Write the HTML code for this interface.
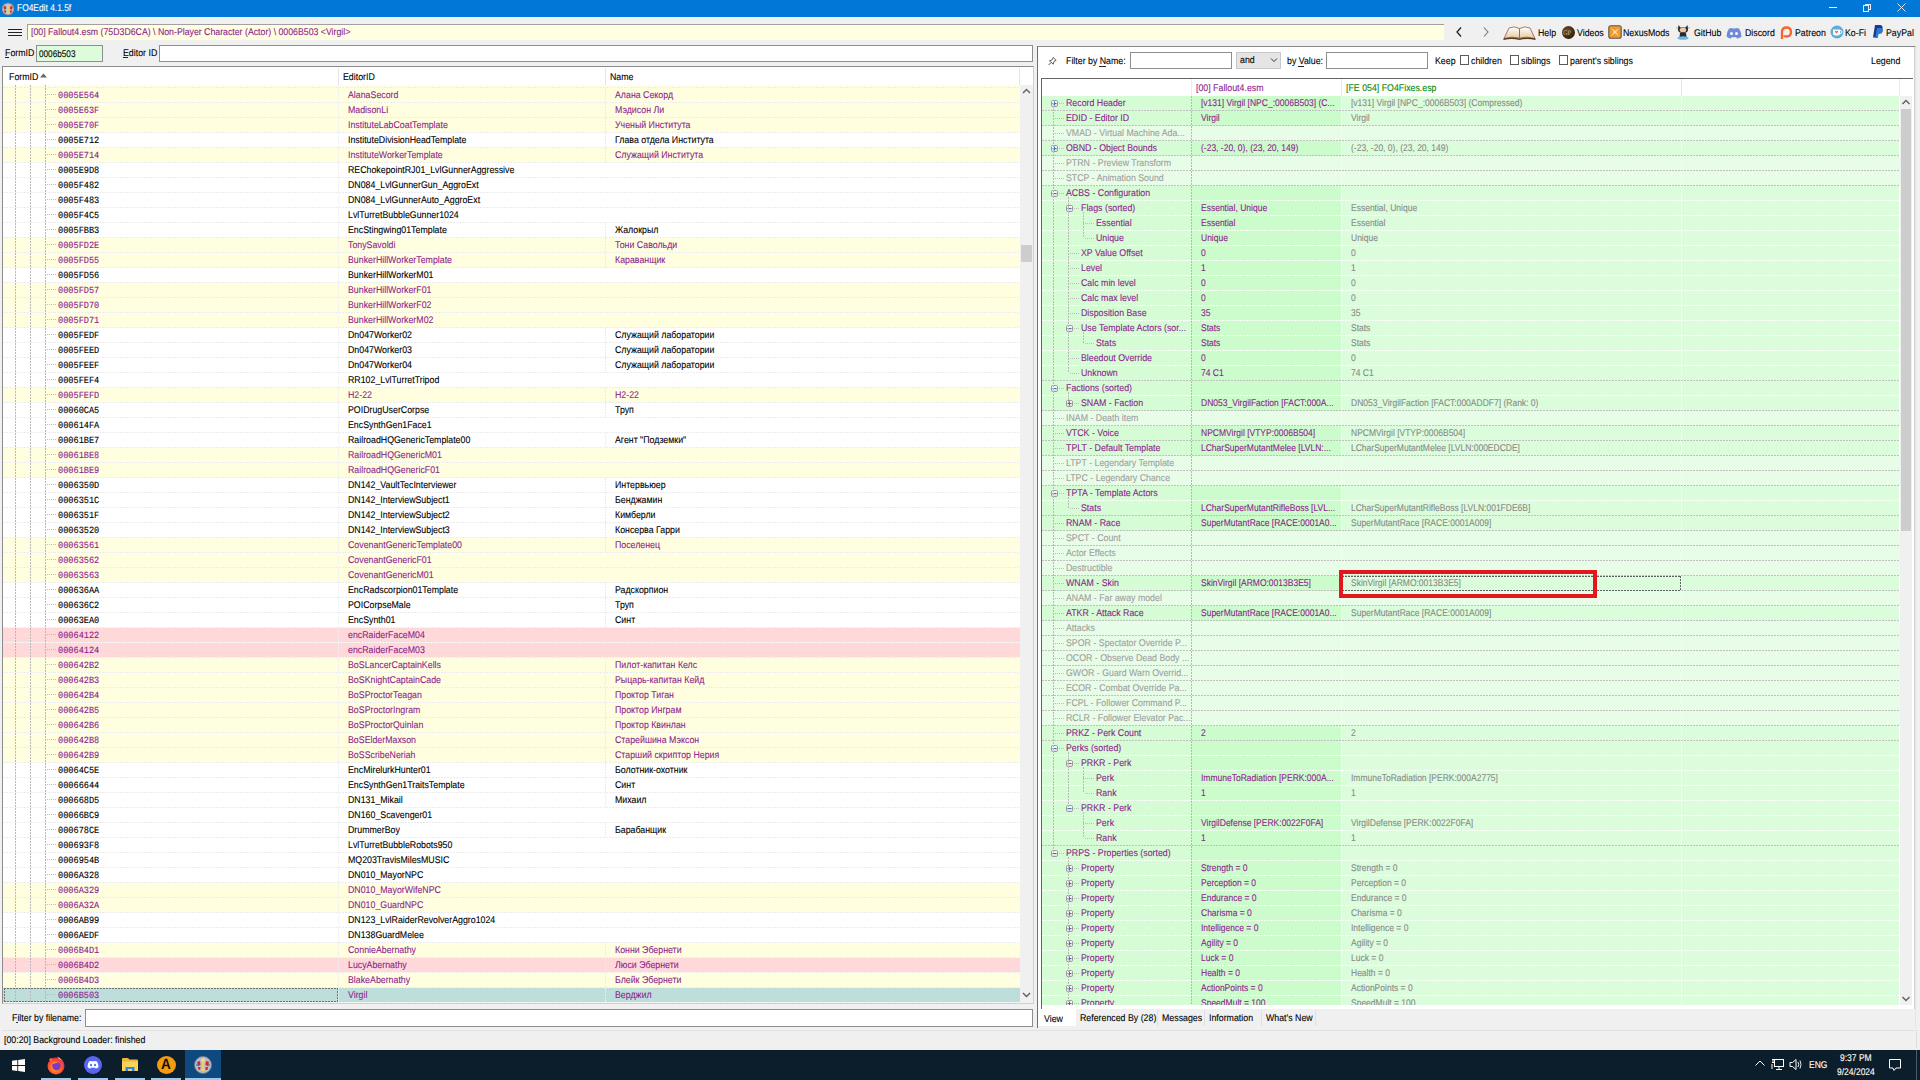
<!DOCTYPE html><html><head><meta charset="utf-8"><style>
*{margin:0;padding:0;box-sizing:border-box}
html,body{width:1920px;height:1080px;overflow:hidden;background:#f0f0f0}
body{position:relative;font-family:"Liberation Sans",sans-serif;font-size:8.8px;color:#000}
div{position:absolute}
.t{white-space:pre;line-height:14px;height:14px;-webkit-text-stroke-width:0.1px;font-size:9.75px;text-rendering:geometricPrecision;transform:scaleX(0.9026);transform-origin:0 0}
.m{-webkit-text-stroke-width:0.12px;transform:scaleX(0.905)}
.m{font-family:"Liberation Mono",monospace;font-size:9.5px}
.vd{background:repeating-linear-gradient(180deg,#b8b8b8 0 2px,transparent 2px 3px)}
.hdd{background:repeating-linear-gradient(90deg,#bdbdbd 0 1px,transparent 1px 2px)}
.hd{background:repeating-linear-gradient(90deg,#ececec 0 2px,#ffffff 2px 3px)}
</style></head><body>
<div style="left:0px;top:0px;width:1920px;height:17px;background:#0078d7"></div><svg style="position:absolute;left:1px;top:2px" width="14" height="14"><circle cx="7" cy="7" r="6.2" fill="#b8bcc8" stroke="#606878" stroke-width="0.8"/><path d="M6 2.5Q7.5 1.8 8 3L7.7 6.5L8.5 12H5.7L6.2 6.5Z" fill="#e8d070"/><path d="M2.5 4.5L4.8 4L5 7L3 7.5Z M9.5 4L11.8 4.5L11 7.5L9 7Z M3 8.5L5 8.5L4.8 11L3.2 10Z M9.2 8.5L11 8.5L10.8 10.5L9.2 11Z" fill="#d02828"/></svg><div class="t" style="left:17px;top:2px;color:#fff;font-size:9.75px;transform:scaleX(0.8615)">FO4Edit 4.1.5f</div><div style="left:1829px;top:7px;width:8px;height:1px;background:#f4f8ff"></div><div style="left:1865px;top:4px;width:6px;height:6px;border:1px solid #e8f0ff"></div><div style="left:1863px;top:5px;width:6px;height:7px;border:1px solid #e8f0ff;background:#0078d7"></div><svg style="position:absolute;left:1897px;top:3px" width="9" height="9"><path d="M0.5 0.5L8.5 8.5M8.5 0.5L0.5 8.5" stroke="#f0f4ff" stroke-width="0.9"/></svg><div style="left:8px;top:29px;width:14px;height:1.2px;background:#222"></div><div style="left:8px;top:32px;width:14px;height:1.2px;background:#222"></div><div style="left:8px;top:35px;width:14px;height:1.2px;background:#222"></div><div style="left:27px;top:24px;width:1417px;height:16px;background:#ffffe1;border-top:1px solid #a0a0a0;border-left:1px solid #a0a0a0"></div><div class="t" style="left:31px;top:25.5px;color:#8e1e8e;font-size:9.75px;transform:scaleX(0.8974)">[00] Fallout4.esm (75D3D6CA) \ Non-Player Character (Actor) \ 0006B503 &lt;Virgil&gt;</div><svg style="position:absolute;left:1453px;top:26px" width="40" height="12"><path d="M8 1.5L4 6L8 10.5" stroke="#222" stroke-width="1.3" fill="none"/><path d="M31 1.5L35 6L31 10.5" stroke="#777" stroke-width="1.1" fill="none"/></svg><svg style="position:absolute;left:1503px;top:24px" width="33" height="17"><defs><linearGradient id="bk" x1="0" y1="0" x2="0" y2="1"><stop offset="0" stop-color="#ffffff"/><stop offset="1" stop-color="#e8c8a0"/></linearGradient></defs><path d="M1 14.5L6 4Q11 1.5 16.5 4.5L16.5 14Q9 12 1 14.5Z" fill="url(#bk)" stroke="#8a6040" stroke-width="0.8"/><path d="M32 14.5L27 4Q22 1.5 16.5 4.5L16.5 14Q24 12 32 14.5Z" fill="url(#bk)" stroke="#8a6040" stroke-width="0.8"/><path d="M0.5 14.5Q9 12.5 16.5 14.5Q24 12.5 32.5 14.5L32.5 16Q24 14 16.5 16Q9 14 0.5 16Z" fill="#5a3818"/></svg><div class="t" style="left:1538px;top:27px;">Help</div><div style="left:1562px;top:26px;width:13px;height:13px;border-radius:50%;background:radial-gradient(circle at 40% 35%,#6a5030 0,#2a1a10 80%)"></div><div class="t" style="left:1563px;top:25.5px;color:#c8b070;font-size:7px;font-family:'Liberation Serif';-webkit-text-stroke-width:0">GP</div><div class="t" style="left:1577px;top:27px;">Videos</div><svg style="position:absolute;left:1608px;top:25px" width="14" height="14"><rect x="0.8" y="0.8" width="12.4" height="12.4" rx="2" fill="#f39a2a" stroke="#555" stroke-width="1.1"/><path d="M3 3L7 6L11 3L8 7L11 11L7 8L3 11L6 7Z" fill="#fde8c8"/></svg><div class="t" style="left:1623px;top:27px;">NexusMods</div><svg style="position:absolute;left:1676px;top:24px" width="14" height="17"><path d="M2.5 1L4.5 3.5H9.5L11.5 1L12 5Q12.5 9 7 9Q1.5 9 2 5Z" fill="#2a2a2a"/><ellipse cx="7" cy="6" rx="3.3" ry="2.2" fill="#f0c8a8"/><path d="M4 9H10L10.5 13H3.5Z" fill="#2a2a2a"/><ellipse cx="7" cy="14" rx="5.5" ry="1.8" fill="#6ab8e8"/><path d="M0 4H2M12 4H14" stroke="#888" stroke-width="0.6"/></svg><div class="t" style="left:1694px;top:27px;">GitHub</div><svg style="position:absolute;left:1726px;top:27px" width="16" height="12"><path d="M3 1.5Q6 0.5 7 1.5H9Q10 0.5 13 1.5Q15.5 5 15.5 9.5Q13.5 11.5 11 11.5L10 10Q8 10.7 6 10L5 11.5Q2.5 11.5 0.5 9.5Q0.5 5 3 1.5Z" fill="#7289da"/><ellipse cx="5.5" cy="6.5" rx="1.4" ry="1.6" fill="#fff"/><ellipse cx="10.5" cy="6.5" rx="1.4" ry="1.6" fill="#fff"/></svg><div class="t" style="left:1745px;top:27px;">Discord</div><svg style="position:absolute;left:1779px;top:25px" width="14" height="15"><path d="M3 14V7Q3 2.5 7.5 2.5Q12 2.5 12 7Q12 11.5 7.5 11.5Q5.5 11.5 5 10.5" fill="none" stroke="#f6652e" stroke-width="2.3"/></svg><div class="t" style="left:1795px;top:27px;">Patreon</div><svg style="position:absolute;left:1830px;top:25px" width="14" height="14"><circle cx="7" cy="7" r="6.5" fill="#5aaed8"/><path d="M3 4.5H10V8.5Q10 10.5 8 10.5H5Q3 10.5 3 8.5Z" fill="#fff"/><path d="M10 5.5Q12 5.5 12 7Q12 8.5 10 8.5" fill="none" stroke="#fff" stroke-width="1"/><path d="M6.5 8.5L5 7Q4.5 6 5.5 5.8Q6.2 5.7 6.5 6.4Q6.8 5.7 7.5 5.8Q8.5 6 8 7Z" fill="#ff5e5b"/></svg><div class="t" style="left:1845px;top:27px;">Ko-Fi</div><svg style="position:absolute;left:1872px;top:24px" width="11" height="15"><path d="M3 1H8Q11 1 10.5 5Q10 8 6 8H5L4 13.5H1Z" fill="#1a3a8a"/><path d="M5 4H9Q11.5 4 10.8 7.5Q10 10 7 10H6.5L5.8 14H3.2Z" fill="#2a7ad0"/></svg><div class="t" style="left:1886px;top:27px;">PayPal</div><div class="t" style="left:5px;top:47px;">FormID</div><div style="left:5px;top:57px;width:4px;height:1px;background:#222"></div><div style="left:36px;top:45px;width:67px;height:17px;background:#dcfcdc;border:1px solid #8e8e8e"></div><div class="t" style="left:39px;top:47.8px;color:#000;font-size:9.75px;transform:scaleX(0.8410)">0006b503</div><div class="t" style="left:123px;top:47px;">Editor ID</div><div style="left:123px;top:57px;width:5px;height:1px;background:#222"></div><div style="left:159px;top:45px;width:874px;height:17px;background:#fff;border:1px solid #8e8e8e"></div><div style="left:2px;top:66px;width:1032px;height:938px;background:#fff;border:1px solid #8c8c8c;border-right-color:#d0d0d0;border-bottom-color:#d0d0d0"></div><div class="t" style="left:9px;top:70.5px;">FormID</div><svg style="position:absolute;left:40px;top:73px" width="8" height="5"><path d="M0 4.5L3.5 0.5L7 4.5Z" fill="#666"/></svg><div style="left:338px;top:68px;width:1px;height:17px;background:#e5e5e5"></div><div class="t" style="left:343px;top:70.5px;">EditorID</div><div style="left:605px;top:68px;width:1px;height:17px;background:#e5e5e5"></div><div class="t" style="left:610px;top:70.5px;">Name</div><div style="left:1019px;top:68px;width:1px;height:17px;background:#e5e5e5"></div><div style="left:3px;top:85px;width:1017px;height:918px;overflow:hidden"><div style="left:0;top:0;width:1017px;height:3px;background:#ffffe0"></div><div style="left:0;top:3px;width:1017px;height:15px;background:#ffffe0"></div><div style="left:0;top:18px;width:1017px;height:15px;background:#ffffe0"></div><div style="left:0;top:33px;width:1017px;height:15px;background:#ffffe0"></div><div style="left:0;top:48px;width:1017px;height:15px;background:#ffffff"></div><div style="left:0;top:63px;width:1017px;height:15px;background:#ffffe0"></div><div style="left:0;top:78px;width:1017px;height:15px;background:#ffffff"></div><div style="left:0;top:93px;width:1017px;height:15px;background:#ffffff"></div><div style="left:0;top:108px;width:1017px;height:15px;background:#ffffff"></div><div style="left:0;top:123px;width:1017px;height:15px;background:#ffffff"></div><div style="left:0;top:138px;width:1017px;height:15px;background:#ffffff"></div><div style="left:0;top:153px;width:1017px;height:15px;background:#ffffe0"></div><div style="left:0;top:168px;width:1017px;height:15px;background:#ffffe0"></div><div style="left:0;top:183px;width:1017px;height:15px;background:#ffffff"></div><div style="left:0;top:198px;width:1017px;height:15px;background:#ffffe0"></div><div style="left:0;top:213px;width:1017px;height:15px;background:#ffffe0"></div><div style="left:0;top:228px;width:1017px;height:15px;background:#ffffe0"></div><div style="left:0;top:243px;width:1017px;height:15px;background:#ffffff"></div><div style="left:0;top:258px;width:1017px;height:15px;background:#ffffff"></div><div style="left:0;top:273px;width:1017px;height:15px;background:#ffffff"></div><div style="left:0;top:288px;width:1017px;height:15px;background:#ffffff"></div><div style="left:0;top:303px;width:1017px;height:15px;background:#ffffe0"></div><div style="left:0;top:318px;width:1017px;height:15px;background:#ffffff"></div><div style="left:0;top:333px;width:1017px;height:15px;background:#ffffff"></div><div style="left:0;top:348px;width:1017px;height:15px;background:#ffffff"></div><div style="left:0;top:363px;width:1017px;height:15px;background:#ffffe0"></div><div style="left:0;top:378px;width:1017px;height:15px;background:#ffffe0"></div><div style="left:0;top:393px;width:1017px;height:15px;background:#ffffff"></div><div style="left:0;top:408px;width:1017px;height:15px;background:#ffffff"></div><div style="left:0;top:423px;width:1017px;height:15px;background:#ffffff"></div><div style="left:0;top:438px;width:1017px;height:15px;background:#ffffff"></div><div style="left:0;top:453px;width:1017px;height:15px;background:#ffffe0"></div><div style="left:0;top:468px;width:1017px;height:15px;background:#ffffe0"></div><div style="left:0;top:483px;width:1017px;height:15px;background:#ffffe0"></div><div style="left:0;top:498px;width:1017px;height:15px;background:#ffffff"></div><div style="left:0;top:513px;width:1017px;height:15px;background:#ffffff"></div><div style="left:0;top:528px;width:1017px;height:15px;background:#ffffff"></div><div style="left:0;top:543px;width:1017px;height:15px;background:#ffd9d9"></div><div style="left:0;top:558px;width:1017px;height:15px;background:#ffd9d9"></div><div style="left:0;top:573px;width:1017px;height:15px;background:#ffffe0"></div><div style="left:0;top:588px;width:1017px;height:15px;background:#ffffe0"></div><div style="left:0;top:603px;width:1017px;height:15px;background:#ffffe0"></div><div style="left:0;top:618px;width:1017px;height:15px;background:#ffffe0"></div><div style="left:0;top:633px;width:1017px;height:15px;background:#ffffe0"></div><div style="left:0;top:648px;width:1017px;height:15px;background:#ffffe0"></div><div style="left:0;top:663px;width:1017px;height:15px;background:#ffffe0"></div><div style="left:0;top:678px;width:1017px;height:15px;background:#ffffff"></div><div style="left:0;top:693px;width:1017px;height:15px;background:#ffffff"></div><div style="left:0;top:708px;width:1017px;height:15px;background:#ffffff"></div><div style="left:0;top:723px;width:1017px;height:15px;background:#ffffff"></div><div style="left:0;top:738px;width:1017px;height:15px;background:#ffffff"></div><div style="left:0;top:753px;width:1017px;height:15px;background:#ffffff"></div><div style="left:0;top:768px;width:1017px;height:15px;background:#ffffff"></div><div style="left:0;top:783px;width:1017px;height:15px;background:#ffffff"></div><div style="left:0;top:798px;width:1017px;height:15px;background:#ffffe0"></div><div style="left:0;top:813px;width:1017px;height:15px;background:#ffffe0"></div><div style="left:0;top:828px;width:1017px;height:15px;background:#ffffff"></div><div style="left:0;top:843px;width:1017px;height:15px;background:#ffffff"></div><div style="left:0;top:858px;width:1017px;height:15px;background:#ffffe0"></div><div style="left:0;top:873px;width:1017px;height:15px;background:#ffd9d9"></div><div style="left:0;top:888px;width:1017px;height:15px;background:#ffffe0"></div><div style="left:0;top:903px;width:1017px;height:15px;background:#bddedb"></div><div class="hd" style="left:0;top:2px;width:1017px;height:1px"></div><div class="hd" style="left:0;top:17px;width:1017px;height:1px"></div><div class="hd" style="left:0;top:32px;width:1017px;height:1px"></div><div class="hd" style="left:0;top:47px;width:1017px;height:1px"></div><div class="hd" style="left:0;top:62px;width:1017px;height:1px"></div><div class="hd" style="left:0;top:77px;width:1017px;height:1px"></div><div class="hd" style="left:0;top:92px;width:1017px;height:1px"></div><div class="hd" style="left:0;top:107px;width:1017px;height:1px"></div><div class="hd" style="left:0;top:122px;width:1017px;height:1px"></div><div class="hd" style="left:0;top:137px;width:1017px;height:1px"></div><div class="hd" style="left:0;top:152px;width:1017px;height:1px"></div><div class="hd" style="left:0;top:167px;width:1017px;height:1px"></div><div class="hd" style="left:0;top:182px;width:1017px;height:1px"></div><div class="hd" style="left:0;top:197px;width:1017px;height:1px"></div><div class="hd" style="left:0;top:212px;width:1017px;height:1px"></div><div class="hd" style="left:0;top:227px;width:1017px;height:1px"></div><div class="hd" style="left:0;top:242px;width:1017px;height:1px"></div><div class="hd" style="left:0;top:257px;width:1017px;height:1px"></div><div class="hd" style="left:0;top:272px;width:1017px;height:1px"></div><div class="hd" style="left:0;top:287px;width:1017px;height:1px"></div><div class="hd" style="left:0;top:302px;width:1017px;height:1px"></div><div class="hd" style="left:0;top:317px;width:1017px;height:1px"></div><div class="hd" style="left:0;top:332px;width:1017px;height:1px"></div><div class="hd" style="left:0;top:347px;width:1017px;height:1px"></div><div class="hd" style="left:0;top:362px;width:1017px;height:1px"></div><div class="hd" style="left:0;top:377px;width:1017px;height:1px"></div><div class="hd" style="left:0;top:392px;width:1017px;height:1px"></div><div class="hd" style="left:0;top:407px;width:1017px;height:1px"></div><div class="hd" style="left:0;top:422px;width:1017px;height:1px"></div><div class="hd" style="left:0;top:437px;width:1017px;height:1px"></div><div class="hd" style="left:0;top:452px;width:1017px;height:1px"></div><div class="hd" style="left:0;top:467px;width:1017px;height:1px"></div><div class="hd" style="left:0;top:482px;width:1017px;height:1px"></div><div class="hd" style="left:0;top:497px;width:1017px;height:1px"></div><div class="hd" style="left:0;top:512px;width:1017px;height:1px"></div><div class="hd" style="left:0;top:527px;width:1017px;height:1px"></div><div class="hd" style="left:0;top:542px;width:1017px;height:1px"></div><div class="hd" style="left:0;top:557px;width:1017px;height:1px"></div><div class="hd" style="left:0;top:572px;width:1017px;height:1px"></div><div class="hd" style="left:0;top:587px;width:1017px;height:1px"></div><div class="hd" style="left:0;top:602px;width:1017px;height:1px"></div><div class="hd" style="left:0;top:617px;width:1017px;height:1px"></div><div class="hd" style="left:0;top:632px;width:1017px;height:1px"></div><div class="hd" style="left:0;top:647px;width:1017px;height:1px"></div><div class="hd" style="left:0;top:662px;width:1017px;height:1px"></div><div class="hd" style="left:0;top:677px;width:1017px;height:1px"></div><div class="hd" style="left:0;top:692px;width:1017px;height:1px"></div><div class="hd" style="left:0;top:707px;width:1017px;height:1px"></div><div class="hd" style="left:0;top:722px;width:1017px;height:1px"></div><div class="hd" style="left:0;top:737px;width:1017px;height:1px"></div><div class="hd" style="left:0;top:752px;width:1017px;height:1px"></div><div class="hd" style="left:0;top:767px;width:1017px;height:1px"></div><div class="hd" style="left:0;top:782px;width:1017px;height:1px"></div><div class="hd" style="left:0;top:797px;width:1017px;height:1px"></div><div class="hd" style="left:0;top:812px;width:1017px;height:1px"></div><div class="hd" style="left:0;top:827px;width:1017px;height:1px"></div><div class="hd" style="left:0;top:842px;width:1017px;height:1px"></div><div class="hd" style="left:0;top:857px;width:1017px;height:1px"></div><div class="hd" style="left:0;top:872px;width:1017px;height:1px"></div><div class="hd" style="left:0;top:887px;width:1017px;height:1px"></div><div class="hd" style="left:0;top:902px;width:1017px;height:1px"></div><div class="hd" style="left:0;top:917px;width:1017px;height:1px"></div><div class="vd" style="left:12px;top:0;width:1px;height:918px"></div><div class="vd" style="left:27px;top:0;width:1px;height:918px"></div><div class="vd" style="left:42px;top:0;width:1px;height:918px"></div><div style="left:335px;top:0;width:1px;height:918px;background:repeating-linear-gradient(180deg,#eeeeee 0 2px,transparent 2px 3px)"></div><div style="left:602px;top:3px;width:1px;height:14px;background:repeating-linear-gradient(180deg,#eaeaea 0 2px,transparent 2px 3px)"></div><div style="left:602px;top:18px;width:1px;height:14px;background:repeating-linear-gradient(180deg,#eaeaea 0 2px,transparent 2px 3px)"></div><div style="left:602px;top:33px;width:1px;height:14px;background:repeating-linear-gradient(180deg,#eaeaea 0 2px,transparent 2px 3px)"></div><div style="left:602px;top:48px;width:1px;height:14px;background:repeating-linear-gradient(180deg,#eaeaea 0 2px,transparent 2px 3px)"></div><div style="left:602px;top:63px;width:1px;height:14px;background:repeating-linear-gradient(180deg,#eaeaea 0 2px,transparent 2px 3px)"></div><div style="left:602px;top:138px;width:1px;height:14px;background:repeating-linear-gradient(180deg,#eaeaea 0 2px,transparent 2px 3px)"></div><div style="left:602px;top:153px;width:1px;height:14px;background:repeating-linear-gradient(180deg,#eaeaea 0 2px,transparent 2px 3px)"></div><div style="left:602px;top:168px;width:1px;height:14px;background:repeating-linear-gradient(180deg,#eaeaea 0 2px,transparent 2px 3px)"></div><div style="left:602px;top:243px;width:1px;height:14px;background:repeating-linear-gradient(180deg,#eaeaea 0 2px,transparent 2px 3px)"></div><div style="left:602px;top:258px;width:1px;height:14px;background:repeating-linear-gradient(180deg,#eaeaea 0 2px,transparent 2px 3px)"></div><div style="left:602px;top:273px;width:1px;height:14px;background:repeating-linear-gradient(180deg,#eaeaea 0 2px,transparent 2px 3px)"></div><div style="left:602px;top:303px;width:1px;height:14px;background:repeating-linear-gradient(180deg,#eaeaea 0 2px,transparent 2px 3px)"></div><div style="left:602px;top:318px;width:1px;height:14px;background:repeating-linear-gradient(180deg,#eaeaea 0 2px,transparent 2px 3px)"></div><div style="left:602px;top:348px;width:1px;height:14px;background:repeating-linear-gradient(180deg,#eaeaea 0 2px,transparent 2px 3px)"></div><div style="left:602px;top:393px;width:1px;height:14px;background:repeating-linear-gradient(180deg,#eaeaea 0 2px,transparent 2px 3px)"></div><div style="left:602px;top:408px;width:1px;height:14px;background:repeating-linear-gradient(180deg,#eaeaea 0 2px,transparent 2px 3px)"></div><div style="left:602px;top:423px;width:1px;height:14px;background:repeating-linear-gradient(180deg,#eaeaea 0 2px,transparent 2px 3px)"></div><div style="left:602px;top:438px;width:1px;height:14px;background:repeating-linear-gradient(180deg,#eaeaea 0 2px,transparent 2px 3px)"></div><div style="left:602px;top:453px;width:1px;height:14px;background:repeating-linear-gradient(180deg,#eaeaea 0 2px,transparent 2px 3px)"></div><div style="left:602px;top:498px;width:1px;height:14px;background:repeating-linear-gradient(180deg,#eaeaea 0 2px,transparent 2px 3px)"></div><div style="left:602px;top:513px;width:1px;height:14px;background:repeating-linear-gradient(180deg,#eaeaea 0 2px,transparent 2px 3px)"></div><div style="left:602px;top:528px;width:1px;height:14px;background:repeating-linear-gradient(180deg,#eaeaea 0 2px,transparent 2px 3px)"></div><div style="left:602px;top:573px;width:1px;height:14px;background:repeating-linear-gradient(180deg,#eaeaea 0 2px,transparent 2px 3px)"></div><div style="left:602px;top:588px;width:1px;height:14px;background:repeating-linear-gradient(180deg,#eaeaea 0 2px,transparent 2px 3px)"></div><div style="left:602px;top:603px;width:1px;height:14px;background:repeating-linear-gradient(180deg,#eaeaea 0 2px,transparent 2px 3px)"></div><div style="left:602px;top:618px;width:1px;height:14px;background:repeating-linear-gradient(180deg,#eaeaea 0 2px,transparent 2px 3px)"></div><div style="left:602px;top:633px;width:1px;height:14px;background:repeating-linear-gradient(180deg,#eaeaea 0 2px,transparent 2px 3px)"></div><div style="left:602px;top:648px;width:1px;height:14px;background:repeating-linear-gradient(180deg,#eaeaea 0 2px,transparent 2px 3px)"></div><div style="left:602px;top:663px;width:1px;height:14px;background:repeating-linear-gradient(180deg,#eaeaea 0 2px,transparent 2px 3px)"></div><div style="left:602px;top:678px;width:1px;height:14px;background:repeating-linear-gradient(180deg,#eaeaea 0 2px,transparent 2px 3px)"></div><div style="left:602px;top:693px;width:1px;height:14px;background:repeating-linear-gradient(180deg,#eaeaea 0 2px,transparent 2px 3px)"></div><div style="left:602px;top:708px;width:1px;height:14px;background:repeating-linear-gradient(180deg,#eaeaea 0 2px,transparent 2px 3px)"></div><div style="left:602px;top:738px;width:1px;height:14px;background:repeating-linear-gradient(180deg,#eaeaea 0 2px,transparent 2px 3px)"></div><div style="left:602px;top:858px;width:1px;height:14px;background:repeating-linear-gradient(180deg,#eaeaea 0 2px,transparent 2px 3px)"></div><div style="left:602px;top:873px;width:1px;height:14px;background:repeating-linear-gradient(180deg,#eaeaea 0 2px,transparent 2px 3px)"></div><div style="left:602px;top:888px;width:1px;height:14px;background:repeating-linear-gradient(180deg,#eaeaea 0 2px,transparent 2px 3px)"></div><div style="left:602px;top:903px;width:1px;height:14px;background:repeating-linear-gradient(180deg,#eaeaea 0 2px,transparent 2px 3px)"></div><div class="hdd" style="left:44px;top:9.0px;width:9px;height:1px"></div><div class="t m" style="left:55px;top:3.5px;color:#8e1e8e">0005E564</div><div class="t" style="left:345px;top:3.5px;color:#8e1e8e">AlanaSecord</div><div class="t" style="left:612px;top:3.5px;color:#8e1e8e">Алана Секорд</div><div class="hdd" style="left:44px;top:24.0px;width:9px;height:1px"></div><div class="t m" style="left:55px;top:18.5px;color:#8e1e8e">0005E63F</div><div class="t" style="left:345px;top:18.5px;color:#8e1e8e">MadisonLi</div><div class="t" style="left:612px;top:18.5px;color:#8e1e8e">Мэдисон Ли</div><div class="hdd" style="left:44px;top:39.0px;width:9px;height:1px"></div><div class="t m" style="left:55px;top:33.5px;color:#8e1e8e">0005E70F</div><div class="t" style="left:345px;top:33.5px;color:#8e1e8e">InstituteLabCoatTemplate</div><div class="t" style="left:612px;top:33.5px;color:#8e1e8e">Ученый Института</div><div class="hdd" style="left:44px;top:54.0px;width:9px;height:1px"></div><div class="t m" style="left:55px;top:48.5px;color:#000">0005E712</div><div class="t" style="left:345px;top:48.5px;color:#000">InstituteDivisionHeadTemplate</div><div class="t" style="left:612px;top:48.5px;color:#000">Глава отдела Института</div><div class="hdd" style="left:44px;top:69.0px;width:9px;height:1px"></div><div class="t m" style="left:55px;top:63.5px;color:#8e1e8e">0005E714</div><div class="t" style="left:345px;top:63.5px;color:#8e1e8e">InstituteWorkerTemplate</div><div class="t" style="left:612px;top:63.5px;color:#8e1e8e">Служащий Института</div><div class="hdd" style="left:44px;top:84.0px;width:9px;height:1px"></div><div class="t m" style="left:55px;top:78.5px;color:#000">0005E9D8</div><div class="t" style="left:345px;top:78.5px;color:#000">REChokepointRJ01_LvlGunnerAggressive</div><div class="hdd" style="left:44px;top:99.0px;width:9px;height:1px"></div><div class="t m" style="left:55px;top:93.5px;color:#000">0005F482</div><div class="t" style="left:345px;top:93.5px;color:#000">DN084_LvlGunnerGun_AggroExt</div><div class="hdd" style="left:44px;top:114.0px;width:9px;height:1px"></div><div class="t m" style="left:55px;top:108.5px;color:#000">0005F483</div><div class="t" style="left:345px;top:108.5px;color:#000">DN084_LvlGunnerAuto_AggroExt</div><div class="hdd" style="left:44px;top:129.0px;width:9px;height:1px"></div><div class="t m" style="left:55px;top:123.5px;color:#000">0005F4C5</div><div class="t" style="left:345px;top:123.5px;color:#000">LvlTurretBubbleGunner1024</div><div class="hdd" style="left:44px;top:144.0px;width:9px;height:1px"></div><div class="t m" style="left:55px;top:138.5px;color:#000">0005FBB3</div><div class="t" style="left:345px;top:138.5px;color:#000">EncStingwing01Template</div><div class="t" style="left:612px;top:138.5px;color:#000">Жалокрыл</div><div class="hdd" style="left:44px;top:159.0px;width:9px;height:1px"></div><div class="t m" style="left:55px;top:153.5px;color:#8e1e8e">0005FD2E</div><div class="t" style="left:345px;top:153.5px;color:#8e1e8e">TonySavoldi</div><div class="t" style="left:612px;top:153.5px;color:#8e1e8e">Тони Савольди</div><div class="hdd" style="left:44px;top:174.0px;width:9px;height:1px"></div><div class="t m" style="left:55px;top:168.5px;color:#8e1e8e">0005FD55</div><div class="t" style="left:345px;top:168.5px;color:#8e1e8e">BunkerHillWorkerTemplate</div><div class="t" style="left:612px;top:168.5px;color:#8e1e8e">Караванщик</div><div class="hdd" style="left:44px;top:189.0px;width:9px;height:1px"></div><div class="t m" style="left:55px;top:183.5px;color:#000">0005FD56</div><div class="t" style="left:345px;top:183.5px;color:#000">BunkerHillWorkerM01</div><div class="hdd" style="left:44px;top:204.0px;width:9px;height:1px"></div><div class="t m" style="left:55px;top:198.5px;color:#8e1e8e">0005FD57</div><div class="t" style="left:345px;top:198.5px;color:#8e1e8e">BunkerHillWorkerF01</div><div class="hdd" style="left:44px;top:219.0px;width:9px;height:1px"></div><div class="t m" style="left:55px;top:213.5px;color:#8e1e8e">0005FD70</div><div class="t" style="left:345px;top:213.5px;color:#8e1e8e">BunkerHillWorkerF02</div><div class="hdd" style="left:44px;top:234.0px;width:9px;height:1px"></div><div class="t m" style="left:55px;top:228.5px;color:#8e1e8e">0005FD71</div><div class="t" style="left:345px;top:228.5px;color:#8e1e8e">BunkerHillWorkerM02</div><div class="hdd" style="left:44px;top:249.0px;width:9px;height:1px"></div><div class="t m" style="left:55px;top:243.5px;color:#000">0005FEDF</div><div class="t" style="left:345px;top:243.5px;color:#000">Dn047Worker02</div><div class="t" style="left:612px;top:243.5px;color:#000">Служащий лаборатории</div><div class="hdd" style="left:44px;top:264.0px;width:9px;height:1px"></div><div class="t m" style="left:55px;top:258.5px;color:#000">0005FEED</div><div class="t" style="left:345px;top:258.5px;color:#000">Dn047Worker03</div><div class="t" style="left:612px;top:258.5px;color:#000">Служащий лаборатории</div><div class="hdd" style="left:44px;top:279.0px;width:9px;height:1px"></div><div class="t m" style="left:55px;top:273.5px;color:#000">0005FEEF</div><div class="t" style="left:345px;top:273.5px;color:#000">Dn047Worker04</div><div class="t" style="left:612px;top:273.5px;color:#000">Служащий лаборатории</div><div class="hdd" style="left:44px;top:294.0px;width:9px;height:1px"></div><div class="t m" style="left:55px;top:288.5px;color:#000">0005FEF4</div><div class="t" style="left:345px;top:288.5px;color:#000">RR102_LvlTurretTripod</div><div class="hdd" style="left:44px;top:309.0px;width:9px;height:1px"></div><div class="t m" style="left:55px;top:303.5px;color:#8e1e8e">0005FEFD</div><div class="t" style="left:345px;top:303.5px;color:#8e1e8e">H2-22</div><div class="t" style="left:612px;top:303.5px;color:#8e1e8e">H2-22</div><div class="hdd" style="left:44px;top:324.0px;width:9px;height:1px"></div><div class="t m" style="left:55px;top:318.5px;color:#000">00060CA5</div><div class="t" style="left:345px;top:318.5px;color:#000">POIDrugUserCorpse</div><div class="t" style="left:612px;top:318.5px;color:#000">Труп</div><div class="hdd" style="left:44px;top:339.0px;width:9px;height:1px"></div><div class="t m" style="left:55px;top:333.5px;color:#000">000614FA</div><div class="t" style="left:345px;top:333.5px;color:#000">EncSynthGen1Face1</div><div class="hdd" style="left:44px;top:354.0px;width:9px;height:1px"></div><div class="t m" style="left:55px;top:348.5px;color:#000">00061BE7</div><div class="t" style="left:345px;top:348.5px;color:#000">RailroadHQGenericTemplate00</div><div class="t" style="left:612px;top:348.5px;color:#000">Агент "Подземки"</div><div class="hdd" style="left:44px;top:369.0px;width:9px;height:1px"></div><div class="t m" style="left:55px;top:363.5px;color:#8e1e8e">00061BE8</div><div class="t" style="left:345px;top:363.5px;color:#8e1e8e">RailroadHQGenericM01</div><div class="hdd" style="left:44px;top:384.0px;width:9px;height:1px"></div><div class="t m" style="left:55px;top:378.5px;color:#8e1e8e">00061BE9</div><div class="t" style="left:345px;top:378.5px;color:#8e1e8e">RailroadHQGenericF01</div><div class="hdd" style="left:44px;top:399.0px;width:9px;height:1px"></div><div class="t m" style="left:55px;top:393.5px;color:#000">0006350D</div><div class="t" style="left:345px;top:393.5px;color:#000">DN142_VaultTecInterviewer</div><div class="t" style="left:612px;top:393.5px;color:#000">Интервьюер</div><div class="hdd" style="left:44px;top:414.0px;width:9px;height:1px"></div><div class="t m" style="left:55px;top:408.5px;color:#000">0006351C</div><div class="t" style="left:345px;top:408.5px;color:#000">DN142_InterviewSubject1</div><div class="t" style="left:612px;top:408.5px;color:#000">Бенджамин</div><div class="hdd" style="left:44px;top:429.0px;width:9px;height:1px"></div><div class="t m" style="left:55px;top:423.5px;color:#000">0006351F</div><div class="t" style="left:345px;top:423.5px;color:#000">DN142_InterviewSubject2</div><div class="t" style="left:612px;top:423.5px;color:#000">Кимберли</div><div class="hdd" style="left:44px;top:444.0px;width:9px;height:1px"></div><div class="t m" style="left:55px;top:438.5px;color:#000">00063520</div><div class="t" style="left:345px;top:438.5px;color:#000">DN142_InterviewSubject3</div><div class="t" style="left:612px;top:438.5px;color:#000">Консерва Гарри</div><div class="hdd" style="left:44px;top:459.0px;width:9px;height:1px"></div><div class="t m" style="left:55px;top:453.5px;color:#8e1e8e">00063561</div><div class="t" style="left:345px;top:453.5px;color:#8e1e8e">CovenantGenericTemplate00</div><div class="t" style="left:612px;top:453.5px;color:#8e1e8e">Поселенец</div><div class="hdd" style="left:44px;top:474.0px;width:9px;height:1px"></div><div class="t m" style="left:55px;top:468.5px;color:#8e1e8e">00063562</div><div class="t" style="left:345px;top:468.5px;color:#8e1e8e">CovenantGenericF01</div><div class="hdd" style="left:44px;top:489.0px;width:9px;height:1px"></div><div class="t m" style="left:55px;top:483.5px;color:#8e1e8e">00063563</div><div class="t" style="left:345px;top:483.5px;color:#8e1e8e">CovenantGenericM01</div><div class="hdd" style="left:44px;top:504.0px;width:9px;height:1px"></div><div class="t m" style="left:55px;top:498.5px;color:#000">000636AA</div><div class="t" style="left:345px;top:498.5px;color:#000">EncRadscorpion01Template</div><div class="t" style="left:612px;top:498.5px;color:#000">Радскорпион</div><div class="hdd" style="left:44px;top:519.0px;width:9px;height:1px"></div><div class="t m" style="left:55px;top:513.5px;color:#000">000636C2</div><div class="t" style="left:345px;top:513.5px;color:#000">POICorpseMale</div><div class="t" style="left:612px;top:513.5px;color:#000">Труп</div><div class="hdd" style="left:44px;top:534.0px;width:9px;height:1px"></div><div class="t m" style="left:55px;top:528.5px;color:#000">00063EA0</div><div class="t" style="left:345px;top:528.5px;color:#000">EncSynth01</div><div class="t" style="left:612px;top:528.5px;color:#000">Синт</div><div class="hdd" style="left:44px;top:549.0px;width:9px;height:1px"></div><div class="t m" style="left:55px;top:543.5px;color:#8e1e8e">00064122</div><div class="t" style="left:345px;top:543.5px;color:#8e1e8e">encRaiderFaceM04</div><div class="hdd" style="left:44px;top:564.0px;width:9px;height:1px"></div><div class="t m" style="left:55px;top:558.5px;color:#8e1e8e">00064124</div><div class="t" style="left:345px;top:558.5px;color:#8e1e8e">encRaiderFaceM03</div><div class="hdd" style="left:44px;top:579.0px;width:9px;height:1px"></div><div class="t m" style="left:55px;top:573.5px;color:#8e1e8e">000642B2</div><div class="t" style="left:345px;top:573.5px;color:#8e1e8e">BoSLancerCaptainKells</div><div class="t" style="left:612px;top:573.5px;color:#8e1e8e">Пилот-капитан Келс</div><div class="hdd" style="left:44px;top:594.0px;width:9px;height:1px"></div><div class="t m" style="left:55px;top:588.5px;color:#8e1e8e">000642B3</div><div class="t" style="left:345px;top:588.5px;color:#8e1e8e">BoSKnightCaptainCade</div><div class="t" style="left:612px;top:588.5px;color:#8e1e8e">Рыцарь-капитан Кейд</div><div class="hdd" style="left:44px;top:609.0px;width:9px;height:1px"></div><div class="t m" style="left:55px;top:603.5px;color:#8e1e8e">000642B4</div><div class="t" style="left:345px;top:603.5px;color:#8e1e8e">BoSProctorTeagan</div><div class="t" style="left:612px;top:603.5px;color:#8e1e8e">Проктор Тиган</div><div class="hdd" style="left:44px;top:624.0px;width:9px;height:1px"></div><div class="t m" style="left:55px;top:618.5px;color:#8e1e8e">000642B5</div><div class="t" style="left:345px;top:618.5px;color:#8e1e8e">BoSProctorIngram</div><div class="t" style="left:612px;top:618.5px;color:#8e1e8e">Проктор Инграм</div><div class="hdd" style="left:44px;top:639.0px;width:9px;height:1px"></div><div class="t m" style="left:55px;top:633.5px;color:#8e1e8e">000642B6</div><div class="t" style="left:345px;top:633.5px;color:#8e1e8e">BoSProctorQuinlan</div><div class="t" style="left:612px;top:633.5px;color:#8e1e8e">Проктор Квинлан</div><div class="hdd" style="left:44px;top:654.0px;width:9px;height:1px"></div><div class="t m" style="left:55px;top:648.5px;color:#8e1e8e">000642B8</div><div class="t" style="left:345px;top:648.5px;color:#8e1e8e">BoSElderMaxson</div><div class="t" style="left:612px;top:648.5px;color:#8e1e8e">Старейшина Мэксон</div><div class="hdd" style="left:44px;top:669.0px;width:9px;height:1px"></div><div class="t m" style="left:55px;top:663.5px;color:#8e1e8e">000642B9</div><div class="t" style="left:345px;top:663.5px;color:#8e1e8e">BoSScribeNeriah</div><div class="t" style="left:612px;top:663.5px;color:#8e1e8e">Старший скриптор Нерия</div><div class="hdd" style="left:44px;top:684.0px;width:9px;height:1px"></div><div class="t m" style="left:55px;top:678.5px;color:#000">00064C5E</div><div class="t" style="left:345px;top:678.5px;color:#000">EncMirelurkHunter01</div><div class="t" style="left:612px;top:678.5px;color:#000">Болотник-охотник</div><div class="hdd" style="left:44px;top:699.0px;width:9px;height:1px"></div><div class="t m" style="left:55px;top:693.5px;color:#000">00066644</div><div class="t" style="left:345px;top:693.5px;color:#000">EncSynthGen1TraitsTemplate</div><div class="t" style="left:612px;top:693.5px;color:#000">Синт</div><div class="hdd" style="left:44px;top:714.0px;width:9px;height:1px"></div><div class="t m" style="left:55px;top:708.5px;color:#000">000668D5</div><div class="t" style="left:345px;top:708.5px;color:#000">DN131_Mikail</div><div class="t" style="left:612px;top:708.5px;color:#000">Михаил</div><div class="hdd" style="left:44px;top:729.0px;width:9px;height:1px"></div><div class="t m" style="left:55px;top:723.5px;color:#000">00066BC9</div><div class="t" style="left:345px;top:723.5px;color:#000">DN160_Scavenger01</div><div class="hdd" style="left:44px;top:744.0px;width:9px;height:1px"></div><div class="t m" style="left:55px;top:738.5px;color:#000">000678CE</div><div class="t" style="left:345px;top:738.5px;color:#000">DrummerBoy</div><div class="t" style="left:612px;top:738.5px;color:#000">Барабанщик</div><div class="hdd" style="left:44px;top:759.0px;width:9px;height:1px"></div><div class="t m" style="left:55px;top:753.5px;color:#000">000693F8</div><div class="t" style="left:345px;top:753.5px;color:#000">LvlTurretBubbleRobots950</div><div class="hdd" style="left:44px;top:774.0px;width:9px;height:1px"></div><div class="t m" style="left:55px;top:768.5px;color:#000">0006954B</div><div class="t" style="left:345px;top:768.5px;color:#000">MQ203TravisMilesMUSIC</div><div class="hdd" style="left:44px;top:789.0px;width:9px;height:1px"></div><div class="t m" style="left:55px;top:783.5px;color:#000">0006A328</div><div class="t" style="left:345px;top:783.5px;color:#000">DN010_MayorNPC</div><div class="hdd" style="left:44px;top:804.0px;width:9px;height:1px"></div><div class="t m" style="left:55px;top:798.5px;color:#8e1e8e">0006A329</div><div class="t" style="left:345px;top:798.5px;color:#8e1e8e">DN010_MayorWifeNPC</div><div class="hdd" style="left:44px;top:819.0px;width:9px;height:1px"></div><div class="t m" style="left:55px;top:813.5px;color:#8e1e8e">0006A32A</div><div class="t" style="left:345px;top:813.5px;color:#8e1e8e">DN010_GuardNPC</div><div class="hdd" style="left:44px;top:834.0px;width:9px;height:1px"></div><div class="t m" style="left:55px;top:828.5px;color:#000">0006AB99</div><div class="t" style="left:345px;top:828.5px;color:#000">DN123_LvlRaiderRevolverAggro1024</div><div class="hdd" style="left:44px;top:849.0px;width:9px;height:1px"></div><div class="t m" style="left:55px;top:843.5px;color:#000">0006AEDF</div><div class="t" style="left:345px;top:843.5px;color:#000">DN138GuardMelee</div><div class="hdd" style="left:44px;top:864.0px;width:9px;height:1px"></div><div class="t m" style="left:55px;top:858.5px;color:#8e1e8e">0006B4D1</div><div class="t" style="left:345px;top:858.5px;color:#8e1e8e">ConnieAbernathy</div><div class="t" style="left:612px;top:858.5px;color:#8e1e8e">Конни Эбернети</div><div class="hdd" style="left:44px;top:879.0px;width:9px;height:1px"></div><div class="t m" style="left:55px;top:873.5px;color:#8e1e8e">0006B4D2</div><div class="t" style="left:345px;top:873.5px;color:#8e1e8e">LucyAbernathy</div><div class="t" style="left:612px;top:873.5px;color:#8e1e8e">Люси Эбернети</div><div class="hdd" style="left:44px;top:894.0px;width:9px;height:1px"></div><div class="t m" style="left:55px;top:888.5px;color:#8e1e8e">0006B4D3</div><div class="t" style="left:345px;top:888.5px;color:#8e1e8e">BlakeAbernathy</div><div class="t" style="left:612px;top:888.5px;color:#8e1e8e">Блейк Эбернети</div><div class="hdd" style="left:44px;top:909.0px;width:9px;height:1px"></div><div class="t m" style="left:55px;top:903.5px;color:#8e1e8e">0006B503</div><div class="t" style="left:345px;top:903.5px;color:#8e1e8e">Virgil</div><div class="t" style="left:612px;top:903.5px;color:#8e1e8e">Верджил</div><div style="left:1px;top:903px;width:334px;height:1px;background:repeating-linear-gradient(90deg,#707070 0 2px,transparent 2px 3px)"></div><div style="left:1px;top:916px;width:334px;height:1px;background:repeating-linear-gradient(90deg,#707070 0 2px,transparent 2px 3px)"></div><div style="left:1px;top:903px;width:1px;height:14px;background:repeating-linear-gradient(180deg,#707070 0 2px,transparent 2px 3px)"></div><div style="left:334px;top:903px;width:1px;height:14px;background:repeating-linear-gradient(180deg,#707070 0 2px,transparent 2px 3px)"></div></div><div style="left:1020px;top:85px;width:13px;height:918px;background:#f0f0f0"></div><svg style="position:absolute;left:1021px;top:87px" width="11" height="8"><path d="M2 6L5.5 2.5L9 6" stroke="#606060" stroke-width="1.4" fill="none"/></svg><svg style="position:absolute;left:1021px;top:991px" width="11" height="8"><path d="M2 2L5.5 5.5L9 2" stroke="#606060" stroke-width="1.4" fill="none"/></svg><div style="left:1021px;top:245px;width:11px;height:17px;background:#cdcdcd"></div><div class="t" style="left:12px;top:1011.5px;">Filter by filename:</div><div style="left:16px;top:1022px;width:2px;height:1px;background:#333"></div><div style="left:85px;top:1009px;width:948px;height:18px;background:#fff;border:1px solid #8e8e8e"></div><div style="left:2px;top:1030px;width:1916px;height:1px;background:#e2e2e2"></div><div style="left:1916px;top:1032px;width:1px;height:16px;background:#dcdcdc"></div><div class="t" style="left:4px;top:1034px;font-size:9.75px;transform:scaleX(0.9026)">[00:20] Background Loader: finished</div><div style="left:1037px;top:46px;width:879px;height:982px;background:#fff;border-left:1px solid #6e6e6e;border-top:1px solid #8a8a8a;border-right:1px solid #e4e4e4"></div><svg style="position:absolute;left:1047px;top:56px" width="11" height="11"><path d="M2.5 4.8L5.2 3.8L6.2 1.5L9.2 4.4L7 5.4L6.2 8.2Z" fill="#fff" stroke="#4a4a5a" stroke-width="0.9" stroke-linejoin="round"/><path d="M4 6.6L1.6 9" stroke="#4a4a5a" stroke-width="1"/></svg><div class="t" style="left:1066px;top:55px;">Filter by Name:</div><div style="left:1099px;top:66px;width:7px;height:1px;background:#222"></div><div style="left:1130px;top:52px;width:102px;height:17px;background:#fff;border:1px solid #8e8e8e"></div><div style="left:1236px;top:52px;width:45px;height:17px;background:#e5e5e5;border:1px solid #c8c8c8"></div><div class="t" style="left:1240px;top:54px;">and</div><svg style="position:absolute;left:1270px;top:57px" width="8" height="6"><path d="M1 1.5L4 4.5L7 1.5" stroke="#333" stroke-width="1" fill="none"/></svg><div class="t" style="left:1287px;top:55px;">by Value:</div><div style="left:1298px;top:66px;width:6px;height:1px;background:#222"></div><div style="left:1326px;top:52px;width:102px;height:17px;background:#fff;border:1px solid #8e8e8e"></div><div class="t" style="left:1435px;top:55px;">Keep</div><div style="left:1460px;top:55px;width:9px;height:10px;background:#fff;border:1px solid #5a5a5a"></div><div class="t" style="left:1471px;top:54.5px;">children</div><div style="left:1510px;top:55px;width:9px;height:10px;background:#fff;border:1px solid #5a5a5a"></div><div class="t" style="left:1521px;top:54.5px;">siblings</div><div style="left:1559px;top:55px;width:9px;height:10px;background:#fff;border:1px solid #5a5a5a"></div><div class="t" style="left:1570px;top:54.5px;">parent's siblings</div><div class="t" style="left:1871px;top:55px;">Legend</div><div style="left:1041px;top:78px;width:872px;height:931px;background:#fff;border-top:1px solid #646464;border-left:1px solid #646464"></div><div style="left:1914px;top:47px;width:1px;height:981px;background:#d4d4d4"></div><div class="t" style="left:1196px;top:81.5px;color:#8e1e8e">[00] Fallout4.esm</div><div style="left:1191px;top:79px;width:1px;height:17px;background:#ececec"></div><div style="left:1341px;top:79px;width:1px;height:17px;background:#e8e8e8"></div><div class="t" style="left:1346px;top:81.5px;color:#088a08">[FE 054] FO4Fixes.esp</div><div style="left:1681px;top:79px;width:1px;height:17px;background:#e8e8e8"></div><div style="left:1899px;top:79px;width:1px;height:17px;background:#e8e8e8"></div><div style="left:1042px;top:96px;width:858px;height:909px;overflow:hidden"><div style="left:0;top:0px;width:149px;height:15px;background:#d6fcd6"></div><div style="left:149px;top:0px;width:150px;height:15px;background:#ccfbcc"></div><div style="left:299px;top:0px;width:558px;height:15px;background:#dcfddc"></div><div style="left:0;top:15px;width:149px;height:15px;background:#d6fcd6"></div><div style="left:149px;top:15px;width:150px;height:15px;background:#ccfbcc"></div><div style="left:299px;top:15px;width:558px;height:15px;background:#dcfddc"></div><div style="left:0;top:30px;width:858px;height:15px;background:#e8fde8"></div><div style="left:0;top:45px;width:149px;height:15px;background:#d6fcd6"></div><div style="left:149px;top:45px;width:150px;height:15px;background:#ccfbcc"></div><div style="left:299px;top:45px;width:558px;height:15px;background:#dcfddc"></div><div style="left:0;top:60px;width:858px;height:15px;background:#e8fde8"></div><div style="left:0;top:75px;width:858px;height:15px;background:#e8fde8"></div><div style="left:0;top:90px;width:149px;height:15px;background:#d6fcd6"></div><div style="left:149px;top:90px;width:150px;height:15px;background:#ccfbcc"></div><div style="left:299px;top:90px;width:558px;height:15px;background:#dcfddc"></div><div style="left:0;top:105px;width:149px;height:15px;background:#d6fcd6"></div><div style="left:149px;top:105px;width:150px;height:15px;background:#ccfbcc"></div><div style="left:299px;top:105px;width:558px;height:15px;background:#dcfddc"></div><div style="left:0;top:120px;width:149px;height:15px;background:#d6fcd6"></div><div style="left:149px;top:120px;width:150px;height:15px;background:#ccfbcc"></div><div style="left:299px;top:120px;width:558px;height:15px;background:#dcfddc"></div><div style="left:0;top:135px;width:149px;height:15px;background:#d6fcd6"></div><div style="left:149px;top:135px;width:150px;height:15px;background:#ccfbcc"></div><div style="left:299px;top:135px;width:558px;height:15px;background:#dcfddc"></div><div style="left:0;top:150px;width:149px;height:15px;background:#d6fcd6"></div><div style="left:149px;top:150px;width:150px;height:15px;background:#ccfbcc"></div><div style="left:299px;top:150px;width:558px;height:15px;background:#dcfddc"></div><div style="left:0;top:165px;width:149px;height:15px;background:#d6fcd6"></div><div style="left:149px;top:165px;width:150px;height:15px;background:#ccfbcc"></div><div style="left:299px;top:165px;width:558px;height:15px;background:#dcfddc"></div><div style="left:0;top:180px;width:149px;height:15px;background:#d6fcd6"></div><div style="left:149px;top:180px;width:150px;height:15px;background:#ccfbcc"></div><div style="left:299px;top:180px;width:558px;height:15px;background:#dcfddc"></div><div style="left:0;top:195px;width:149px;height:15px;background:#d6fcd6"></div><div style="left:149px;top:195px;width:150px;height:15px;background:#ccfbcc"></div><div style="left:299px;top:195px;width:558px;height:15px;background:#dcfddc"></div><div style="left:0;top:210px;width:149px;height:15px;background:#d6fcd6"></div><div style="left:149px;top:210px;width:150px;height:15px;background:#ccfbcc"></div><div style="left:299px;top:210px;width:558px;height:15px;background:#dcfddc"></div><div style="left:0;top:225px;width:149px;height:15px;background:#d6fcd6"></div><div style="left:149px;top:225px;width:150px;height:15px;background:#ccfbcc"></div><div style="left:299px;top:225px;width:558px;height:15px;background:#dcfddc"></div><div style="left:0;top:240px;width:149px;height:15px;background:#d6fcd6"></div><div style="left:149px;top:240px;width:150px;height:15px;background:#ccfbcc"></div><div style="left:299px;top:240px;width:558px;height:15px;background:#dcfddc"></div><div style="left:0;top:255px;width:149px;height:15px;background:#d6fcd6"></div><div style="left:149px;top:255px;width:150px;height:15px;background:#ccfbcc"></div><div style="left:299px;top:255px;width:558px;height:15px;background:#dcfddc"></div><div style="left:0;top:270px;width:149px;height:15px;background:#d6fcd6"></div><div style="left:149px;top:270px;width:150px;height:15px;background:#ccfbcc"></div><div style="left:299px;top:270px;width:558px;height:15px;background:#dcfddc"></div><div style="left:0;top:285px;width:149px;height:15px;background:#d6fcd6"></div><div style="left:149px;top:285px;width:150px;height:15px;background:#ccfbcc"></div><div style="left:299px;top:285px;width:558px;height:15px;background:#dcfddc"></div><div style="left:0;top:300px;width:149px;height:15px;background:#d6fcd6"></div><div style="left:149px;top:300px;width:150px;height:15px;background:#ccfbcc"></div><div style="left:299px;top:300px;width:558px;height:15px;background:#dcfddc"></div><div style="left:0;top:315px;width:858px;height:15px;background:#e8fde8"></div><div style="left:0;top:330px;width:149px;height:15px;background:#d6fcd6"></div><div style="left:149px;top:330px;width:150px;height:15px;background:#ccfbcc"></div><div style="left:299px;top:330px;width:558px;height:15px;background:#dcfddc"></div><div style="left:0;top:345px;width:149px;height:15px;background:#d6fcd6"></div><div style="left:149px;top:345px;width:150px;height:15px;background:#ccfbcc"></div><div style="left:299px;top:345px;width:558px;height:15px;background:#dcfddc"></div><div style="left:0;top:360px;width:858px;height:15px;background:#e8fde8"></div><div style="left:0;top:375px;width:858px;height:15px;background:#e8fde8"></div><div style="left:0;top:390px;width:149px;height:15px;background:#d6fcd6"></div><div style="left:149px;top:390px;width:150px;height:15px;background:#ccfbcc"></div><div style="left:299px;top:390px;width:558px;height:15px;background:#dcfddc"></div><div style="left:0;top:405px;width:149px;height:15px;background:#d6fcd6"></div><div style="left:149px;top:405px;width:150px;height:15px;background:#ccfbcc"></div><div style="left:299px;top:405px;width:558px;height:15px;background:#dcfddc"></div><div style="left:0;top:420px;width:149px;height:15px;background:#d6fcd6"></div><div style="left:149px;top:420px;width:150px;height:15px;background:#ccfbcc"></div><div style="left:299px;top:420px;width:558px;height:15px;background:#dcfddc"></div><div style="left:0;top:435px;width:858px;height:15px;background:#e8fde8"></div><div style="left:0;top:450px;width:858px;height:15px;background:#e8fde8"></div><div style="left:0;top:465px;width:858px;height:15px;background:#e8fde8"></div><div style="left:0;top:480px;width:149px;height:15px;background:#d6fcd6"></div><div style="left:149px;top:480px;width:150px;height:15px;background:#ccfbcc"></div><div style="left:299px;top:480px;width:558px;height:15px;background:#dcfddc"></div><div style="left:0;top:495px;width:858px;height:15px;background:#e8fde8"></div><div style="left:0;top:510px;width:149px;height:15px;background:#d6fcd6"></div><div style="left:149px;top:510px;width:150px;height:15px;background:#ccfbcc"></div><div style="left:299px;top:510px;width:558px;height:15px;background:#dcfddc"></div><div style="left:0;top:525px;width:858px;height:15px;background:#e8fde8"></div><div style="left:0;top:540px;width:858px;height:15px;background:#e8fde8"></div><div style="left:0;top:555px;width:858px;height:15px;background:#e8fde8"></div><div style="left:0;top:570px;width:858px;height:15px;background:#e8fde8"></div><div style="left:0;top:585px;width:858px;height:15px;background:#e8fde8"></div><div style="left:0;top:600px;width:858px;height:15px;background:#e8fde8"></div><div style="left:0;top:615px;width:858px;height:15px;background:#e8fde8"></div><div style="left:0;top:630px;width:149px;height:15px;background:#d6fcd6"></div><div style="left:149px;top:630px;width:150px;height:15px;background:#ccfbcc"></div><div style="left:299px;top:630px;width:558px;height:15px;background:#dcfddc"></div><div style="left:0;top:645px;width:149px;height:15px;background:#d6fcd6"></div><div style="left:149px;top:645px;width:150px;height:15px;background:#ccfbcc"></div><div style="left:299px;top:645px;width:558px;height:15px;background:#dcfddc"></div><div style="left:0;top:660px;width:149px;height:15px;background:#d6fcd6"></div><div style="left:149px;top:660px;width:150px;height:15px;background:#ccfbcc"></div><div style="left:299px;top:660px;width:558px;height:15px;background:#dcfddc"></div><div style="left:0;top:675px;width:149px;height:15px;background:#d6fcd6"></div><div style="left:149px;top:675px;width:150px;height:15px;background:#ccfbcc"></div><div style="left:299px;top:675px;width:558px;height:15px;background:#dcfddc"></div><div style="left:0;top:690px;width:149px;height:15px;background:#d6fcd6"></div><div style="left:149px;top:690px;width:150px;height:15px;background:#ccfbcc"></div><div style="left:299px;top:690px;width:558px;height:15px;background:#dcfddc"></div><div style="left:0;top:705px;width:149px;height:15px;background:#d6fcd6"></div><div style="left:149px;top:705px;width:150px;height:15px;background:#ccfbcc"></div><div style="left:299px;top:705px;width:558px;height:15px;background:#dcfddc"></div><div style="left:0;top:720px;width:149px;height:15px;background:#d6fcd6"></div><div style="left:149px;top:720px;width:150px;height:15px;background:#ccfbcc"></div><div style="left:299px;top:720px;width:558px;height:15px;background:#dcfddc"></div><div style="left:0;top:735px;width:149px;height:15px;background:#d6fcd6"></div><div style="left:149px;top:735px;width:150px;height:15px;background:#ccfbcc"></div><div style="left:299px;top:735px;width:558px;height:15px;background:#dcfddc"></div><div style="left:0;top:750px;width:149px;height:15px;background:#d6fcd6"></div><div style="left:149px;top:750px;width:150px;height:15px;background:#ccfbcc"></div><div style="left:299px;top:750px;width:558px;height:15px;background:#dcfddc"></div><div style="left:0;top:765px;width:149px;height:15px;background:#d6fcd6"></div><div style="left:149px;top:765px;width:150px;height:15px;background:#ccfbcc"></div><div style="left:299px;top:765px;width:558px;height:15px;background:#dcfddc"></div><div style="left:0;top:780px;width:149px;height:15px;background:#d6fcd6"></div><div style="left:149px;top:780px;width:150px;height:15px;background:#ccfbcc"></div><div style="left:299px;top:780px;width:558px;height:15px;background:#dcfddc"></div><div style="left:0;top:795px;width:149px;height:15px;background:#d6fcd6"></div><div style="left:149px;top:795px;width:150px;height:15px;background:#ccfbcc"></div><div style="left:299px;top:795px;width:558px;height:15px;background:#dcfddc"></div><div style="left:0;top:810px;width:149px;height:15px;background:#d6fcd6"></div><div style="left:149px;top:810px;width:150px;height:15px;background:#ccfbcc"></div><div style="left:299px;top:810px;width:558px;height:15px;background:#dcfddc"></div><div style="left:0;top:825px;width:149px;height:15px;background:#d6fcd6"></div><div style="left:149px;top:825px;width:150px;height:15px;background:#ccfbcc"></div><div style="left:299px;top:825px;width:558px;height:15px;background:#dcfddc"></div><div style="left:0;top:840px;width:149px;height:15px;background:#d6fcd6"></div><div style="left:149px;top:840px;width:150px;height:15px;background:#ccfbcc"></div><div style="left:299px;top:840px;width:558px;height:15px;background:#dcfddc"></div><div style="left:0;top:855px;width:149px;height:15px;background:#d6fcd6"></div><div style="left:149px;top:855px;width:150px;height:15px;background:#ccfbcc"></div><div style="left:299px;top:855px;width:558px;height:15px;background:#dcfddc"></div><div style="left:0;top:870px;width:149px;height:15px;background:#d6fcd6"></div><div style="left:149px;top:870px;width:150px;height:15px;background:#ccfbcc"></div><div style="left:299px;top:870px;width:558px;height:15px;background:#dcfddc"></div><div style="left:0;top:885px;width:149px;height:15px;background:#d6fcd6"></div><div style="left:149px;top:885px;width:150px;height:15px;background:#ccfbcc"></div><div style="left:299px;top:885px;width:558px;height:15px;background:#dcfddc"></div><div style="left:0;top:900px;width:149px;height:15px;background:#d6fcd6"></div><div style="left:149px;top:900px;width:150px;height:15px;background:#ccfbcc"></div><div style="left:299px;top:900px;width:558px;height:15px;background:#dcfddc"></div><div style="left:0;top:14px;width:858px;height:1px;background:repeating-linear-gradient(90deg,#c0c0c0 0 2px,transparent 2px 3px)"></div><div style="left:0;top:29px;width:858px;height:1px;background:repeating-linear-gradient(90deg,#c0c0c0 0 2px,transparent 2px 3px)"></div><div style="left:0;top:44px;width:858px;height:1px;background:repeating-linear-gradient(90deg,#c0c0c0 0 2px,transparent 2px 3px)"></div><div style="left:0;top:59px;width:858px;height:1px;background:repeating-linear-gradient(90deg,#c0c0c0 0 2px,transparent 2px 3px)"></div><div style="left:0;top:74px;width:858px;height:1px;background:repeating-linear-gradient(90deg,#c0c0c0 0 2px,transparent 2px 3px)"></div><div style="left:0;top:89px;width:858px;height:1px;background:repeating-linear-gradient(90deg,#c0c0c0 0 2px,transparent 2px 3px)"></div><div style="left:0;top:104px;width:858px;height:1px;background:repeating-linear-gradient(90deg,#ffffff 0 2px,transparent 2px 3px)"></div><div style="left:0;top:119px;width:858px;height:1px;background:repeating-linear-gradient(90deg,#ffffff 0 2px,transparent 2px 3px)"></div><div style="left:0;top:134px;width:858px;height:1px;background:repeating-linear-gradient(90deg,#ffffff 0 2px,transparent 2px 3px)"></div><div style="left:0;top:149px;width:858px;height:1px;background:repeating-linear-gradient(90deg,#ffffff 0 2px,transparent 2px 3px)"></div><div style="left:0;top:164px;width:858px;height:1px;background:repeating-linear-gradient(90deg,#ffffff 0 2px,transparent 2px 3px)"></div><div style="left:0;top:179px;width:858px;height:1px;background:repeating-linear-gradient(90deg,#ffffff 0 2px,transparent 2px 3px)"></div><div style="left:0;top:194px;width:858px;height:1px;background:repeating-linear-gradient(90deg,#ffffff 0 2px,transparent 2px 3px)"></div><div style="left:0;top:209px;width:858px;height:1px;background:repeating-linear-gradient(90deg,#ffffff 0 2px,transparent 2px 3px)"></div><div style="left:0;top:224px;width:858px;height:1px;background:repeating-linear-gradient(90deg,#ffffff 0 2px,transparent 2px 3px)"></div><div style="left:0;top:239px;width:858px;height:1px;background:repeating-linear-gradient(90deg,#ffffff 0 2px,transparent 2px 3px)"></div><div style="left:0;top:254px;width:858px;height:1px;background:repeating-linear-gradient(90deg,#ffffff 0 2px,transparent 2px 3px)"></div><div style="left:0;top:269px;width:858px;height:1px;background:repeating-linear-gradient(90deg,#ffffff 0 2px,transparent 2px 3px)"></div><div style="left:0;top:284px;width:858px;height:1px;background:repeating-linear-gradient(90deg,#c0c0c0 0 2px,transparent 2px 3px)"></div><div style="left:0;top:299px;width:858px;height:1px;background:repeating-linear-gradient(90deg,#ffffff 0 2px,transparent 2px 3px)"></div><div style="left:0;top:314px;width:858px;height:1px;background:repeating-linear-gradient(90deg,#c0c0c0 0 2px,transparent 2px 3px)"></div><div style="left:0;top:329px;width:858px;height:1px;background:repeating-linear-gradient(90deg,#c0c0c0 0 2px,transparent 2px 3px)"></div><div style="left:0;top:344px;width:858px;height:1px;background:repeating-linear-gradient(90deg,#c0c0c0 0 2px,transparent 2px 3px)"></div><div style="left:0;top:359px;width:858px;height:1px;background:repeating-linear-gradient(90deg,#c0c0c0 0 2px,transparent 2px 3px)"></div><div style="left:0;top:374px;width:858px;height:1px;background:repeating-linear-gradient(90deg,#c0c0c0 0 2px,transparent 2px 3px)"></div><div style="left:0;top:389px;width:858px;height:1px;background:repeating-linear-gradient(90deg,#c0c0c0 0 2px,transparent 2px 3px)"></div><div style="left:0;top:404px;width:858px;height:1px;background:repeating-linear-gradient(90deg,#ffffff 0 2px,transparent 2px 3px)"></div><div style="left:0;top:419px;width:858px;height:1px;background:repeating-linear-gradient(90deg,#c0c0c0 0 2px,transparent 2px 3px)"></div><div style="left:0;top:434px;width:858px;height:1px;background:repeating-linear-gradient(90deg,#c0c0c0 0 2px,transparent 2px 3px)"></div><div style="left:0;top:449px;width:858px;height:1px;background:repeating-linear-gradient(90deg,#c0c0c0 0 2px,transparent 2px 3px)"></div><div style="left:0;top:464px;width:858px;height:1px;background:repeating-linear-gradient(90deg,#c0c0c0 0 2px,transparent 2px 3px)"></div><div style="left:0;top:479px;width:858px;height:1px;background:repeating-linear-gradient(90deg,#c0c0c0 0 2px,transparent 2px 3px)"></div><div style="left:0;top:494px;width:858px;height:1px;background:repeating-linear-gradient(90deg,#c0c0c0 0 2px,transparent 2px 3px)"></div><div style="left:0;top:509px;width:858px;height:1px;background:repeating-linear-gradient(90deg,#c0c0c0 0 2px,transparent 2px 3px)"></div><div style="left:0;top:524px;width:858px;height:1px;background:repeating-linear-gradient(90deg,#c0c0c0 0 2px,transparent 2px 3px)"></div><div style="left:0;top:539px;width:858px;height:1px;background:repeating-linear-gradient(90deg,#c0c0c0 0 2px,transparent 2px 3px)"></div><div style="left:0;top:554px;width:858px;height:1px;background:repeating-linear-gradient(90deg,#c0c0c0 0 2px,transparent 2px 3px)"></div><div style="left:0;top:569px;width:858px;height:1px;background:repeating-linear-gradient(90deg,#c0c0c0 0 2px,transparent 2px 3px)"></div><div style="left:0;top:584px;width:858px;height:1px;background:repeating-linear-gradient(90deg,#c0c0c0 0 2px,transparent 2px 3px)"></div><div style="left:0;top:599px;width:858px;height:1px;background:repeating-linear-gradient(90deg,#c0c0c0 0 2px,transparent 2px 3px)"></div><div style="left:0;top:614px;width:858px;height:1px;background:repeating-linear-gradient(90deg,#c0c0c0 0 2px,transparent 2px 3px)"></div><div style="left:0;top:629px;width:858px;height:1px;background:repeating-linear-gradient(90deg,#c0c0c0 0 2px,transparent 2px 3px)"></div><div style="left:0;top:644px;width:858px;height:1px;background:repeating-linear-gradient(90deg,#c0c0c0 0 2px,transparent 2px 3px)"></div><div style="left:0;top:659px;width:858px;height:1px;background:repeating-linear-gradient(90deg,#ffffff 0 2px,transparent 2px 3px)"></div><div style="left:0;top:674px;width:858px;height:1px;background:repeating-linear-gradient(90deg,#ffffff 0 2px,transparent 2px 3px)"></div><div style="left:0;top:689px;width:858px;height:1px;background:repeating-linear-gradient(90deg,#ffffff 0 2px,transparent 2px 3px)"></div><div style="left:0;top:704px;width:858px;height:1px;background:repeating-linear-gradient(90deg,#ffffff 0 2px,transparent 2px 3px)"></div><div style="left:0;top:719px;width:858px;height:1px;background:repeating-linear-gradient(90deg,#ffffff 0 2px,transparent 2px 3px)"></div><div style="left:0;top:734px;width:858px;height:1px;background:repeating-linear-gradient(90deg,#ffffff 0 2px,transparent 2px 3px)"></div><div style="left:0;top:749px;width:858px;height:1px;background:repeating-linear-gradient(90deg,#c0c0c0 0 2px,transparent 2px 3px)"></div><div style="left:0;top:764px;width:858px;height:1px;background:repeating-linear-gradient(90deg,#ffffff 0 2px,transparent 2px 3px)"></div><div style="left:0;top:779px;width:858px;height:1px;background:repeating-linear-gradient(90deg,#ffffff 0 2px,transparent 2px 3px)"></div><div style="left:0;top:794px;width:858px;height:1px;background:repeating-linear-gradient(90deg,#ffffff 0 2px,transparent 2px 3px)"></div><div style="left:0;top:809px;width:858px;height:1px;background:repeating-linear-gradient(90deg,#ffffff 0 2px,transparent 2px 3px)"></div><div style="left:0;top:824px;width:858px;height:1px;background:repeating-linear-gradient(90deg,#ffffff 0 2px,transparent 2px 3px)"></div><div style="left:0;top:839px;width:858px;height:1px;background:repeating-linear-gradient(90deg,#ffffff 0 2px,transparent 2px 3px)"></div><div style="left:0;top:854px;width:858px;height:1px;background:repeating-linear-gradient(90deg,#ffffff 0 2px,transparent 2px 3px)"></div><div style="left:0;top:869px;width:858px;height:1px;background:repeating-linear-gradient(90deg,#ffffff 0 2px,transparent 2px 3px)"></div><div style="left:0;top:884px;width:858px;height:1px;background:repeating-linear-gradient(90deg,#ffffff 0 2px,transparent 2px 3px)"></div><div style="left:0;top:899px;width:858px;height:1px;background:repeating-linear-gradient(90deg,#ffffff 0 2px,transparent 2px 3px)"></div><div style="left:0;top:914px;width:858px;height:1px;background:repeating-linear-gradient(90deg,#c0c0c0 0 2px,transparent 2px 3px)"></div><div style="left:149px;top:0;width:1px;height:909px;background:repeating-linear-gradient(180deg,#b8b8b8 0 2px,transparent 2px 3px)"></div><div style="left:299px;top:0;width:1px;height:909px;background:repeating-linear-gradient(180deg,#f4fff4 0 2px,transparent 2px 3px)"></div><div style="left:639px;top:0;width:1px;height:909px;background:repeating-linear-gradient(180deg,#f4fff4 0 2px,transparent 2px 3px)"></div><div class="t" style="left:24px;top:1px;color:#8e1e8e">Record Header</div><div class="t" style="left:159px;top:1px;color:#8e1e8e;font-size:9.75px;transform:scaleX(0.8718)">[v131] Virgil [NPC_:0006B503] (C...</div><div class="t" style="left:309px;top:1px;color:#8a8a8a;font-size:9.75px;transform:scaleX(0.8718)">[v131] Virgil [NPC_:0006B503] (Compressed)</div><div class="hdd" style="left:13px;top:7px;width:9px;height:1px"></div><svg style="position:absolute;left:9px;top:3.5px" width="7" height="7"><defs><linearGradient id="eb" x1="0" y1="0" x2="0" y2="1"><stop offset="0" stop-color="#ffffff"/><stop offset="1" stop-color="#dcdcdc"/></linearGradient></defs><rect x="0.5" y="0.5" width="6" height="6" rx="1.2" fill="url(#eb)" stroke="#9a9a9a"/><rect x="1.5" y="3" width="4" height="1" fill="#4a6ac0"/><rect x="3" y="1.5" width="1" height="4" fill="#4a6ac0"/></svg><div class="t" style="left:24px;top:16px;color:#8e1e8e">EDID - Editor ID</div><div class="t" style="left:159px;top:16px;color:#8e1e8e;font-size:9.75px;transform:scaleX(0.8718)">Virgil</div><div class="t" style="left:309px;top:16px;color:#8a8a8a;font-size:9.75px;transform:scaleX(0.8718)">Virgil</div><div class="hdd" style="left:13px;top:22px;width:9px;height:1px"></div><div class="t" style="left:24px;top:31px;color:#a0a0a0">VMAD - Virtual Machine Ada...</div><div class="hdd" style="left:13px;top:37px;width:9px;height:1px"></div><div class="t" style="left:24px;top:46px;color:#8e1e8e">OBND - Object Bounds</div><div class="t" style="left:159px;top:46px;color:#8e1e8e;font-size:9.75px;transform:scaleX(0.8718)">(-23, -20, 0), (23, 20, 149)</div><div class="t" style="left:309px;top:46px;color:#8a8a8a;font-size:9.75px;transform:scaleX(0.8718)">(-23, -20, 0), (23, 20, 149)</div><div class="hdd" style="left:13px;top:52px;width:9px;height:1px"></div><svg style="position:absolute;left:9px;top:48.5px" width="7" height="7"><defs><linearGradient id="eb" x1="0" y1="0" x2="0" y2="1"><stop offset="0" stop-color="#ffffff"/><stop offset="1" stop-color="#dcdcdc"/></linearGradient></defs><rect x="0.5" y="0.5" width="6" height="6" rx="1.2" fill="url(#eb)" stroke="#9a9a9a"/><rect x="1.5" y="3" width="4" height="1" fill="#4a6ac0"/><rect x="3" y="1.5" width="1" height="4" fill="#4a6ac0"/></svg><div class="t" style="left:24px;top:61px;color:#a0a0a0">PTRN - Preview Transform</div><div class="hdd" style="left:13px;top:67px;width:9px;height:1px"></div><div class="t" style="left:24px;top:76px;color:#a0a0a0">STCP - Animation Sound</div><div class="hdd" style="left:13px;top:82px;width:9px;height:1px"></div><div class="t" style="left:24px;top:91px;color:#8e1e8e">ACBS - Configuration</div><div class="hdd" style="left:13px;top:97px;width:9px;height:1px"></div><svg style="position:absolute;left:9px;top:93.5px" width="7" height="7"><defs><linearGradient id="eb" x1="0" y1="0" x2="0" y2="1"><stop offset="0" stop-color="#ffffff"/><stop offset="1" stop-color="#dcdcdc"/></linearGradient></defs><rect x="0.5" y="0.5" width="6" height="6" rx="1.2" fill="url(#eb)" stroke="#9a9a9a"/><rect x="1.5" y="3" width="4" height="1" fill="#4a6ac0"/></svg><div class="t" style="left:39px;top:106px;color:#8e1e8e">Flags (sorted)</div><div class="t" style="left:159px;top:106px;color:#8e1e8e;font-size:9.75px;transform:scaleX(0.8718)">Essential, Unique</div><div class="t" style="left:309px;top:106px;color:#8a8a8a;font-size:9.75px;transform:scaleX(0.8718)">Essential, Unique</div><div class="hdd" style="left:28px;top:112px;width:9px;height:1px"></div><svg style="position:absolute;left:24px;top:108.5px" width="7" height="7"><defs><linearGradient id="eb" x1="0" y1="0" x2="0" y2="1"><stop offset="0" stop-color="#ffffff"/><stop offset="1" stop-color="#dcdcdc"/></linearGradient></defs><rect x="0.5" y="0.5" width="6" height="6" rx="1.2" fill="url(#eb)" stroke="#9a9a9a"/><rect x="1.5" y="3" width="4" height="1" fill="#4a6ac0"/></svg><div class="t" style="left:54px;top:121px;color:#8e1e8e">Essential</div><div class="t" style="left:159px;top:121px;color:#8e1e8e;font-size:9.75px;transform:scaleX(0.8718)">Essential</div><div class="t" style="left:309px;top:121px;color:#8a8a8a;font-size:9.75px;transform:scaleX(0.8718)">Essential</div><div class="hdd" style="left:43px;top:127px;width:9px;height:1px"></div><div class="t" style="left:54px;top:136px;color:#8e1e8e">Unique</div><div class="t" style="left:159px;top:136px;color:#8e1e8e;font-size:9.75px;transform:scaleX(0.8718)">Unique</div><div class="t" style="left:309px;top:136px;color:#8a8a8a;font-size:9.75px;transform:scaleX(0.8718)">Unique</div><div class="hdd" style="left:43px;top:142px;width:9px;height:1px"></div><div class="t" style="left:39px;top:151px;color:#8e1e8e">XP Value Offset</div><div class="t" style="left:159px;top:151px;color:#8e1e8e;font-size:9.75px;transform:scaleX(0.8718)">0</div><div class="t" style="left:309px;top:151px;color:#8a8a8a;font-size:9.75px;transform:scaleX(0.8718)">0</div><div class="hdd" style="left:28px;top:157px;width:9px;height:1px"></div><div class="t" style="left:39px;top:166px;color:#8e1e8e">Level</div><div class="t" style="left:159px;top:166px;color:#8e1e8e;font-size:9.75px;transform:scaleX(0.8718)">1</div><div class="t" style="left:309px;top:166px;color:#8a8a8a;font-size:9.75px;transform:scaleX(0.8718)">1</div><div class="hdd" style="left:28px;top:172px;width:9px;height:1px"></div><div class="t" style="left:39px;top:181px;color:#8e1e8e">Calc min level</div><div class="t" style="left:159px;top:181px;color:#8e1e8e;font-size:9.75px;transform:scaleX(0.8718)">0</div><div class="t" style="left:309px;top:181px;color:#8a8a8a;font-size:9.75px;transform:scaleX(0.8718)">0</div><div class="hdd" style="left:28px;top:187px;width:9px;height:1px"></div><div class="t" style="left:39px;top:196px;color:#8e1e8e">Calc max level</div><div class="t" style="left:159px;top:196px;color:#8e1e8e;font-size:9.75px;transform:scaleX(0.8718)">0</div><div class="t" style="left:309px;top:196px;color:#8a8a8a;font-size:9.75px;transform:scaleX(0.8718)">0</div><div class="hdd" style="left:28px;top:202px;width:9px;height:1px"></div><div class="t" style="left:39px;top:211px;color:#8e1e8e">Disposition Base</div><div class="t" style="left:159px;top:211px;color:#8e1e8e;font-size:9.75px;transform:scaleX(0.8718)">35</div><div class="t" style="left:309px;top:211px;color:#8a8a8a;font-size:9.75px;transform:scaleX(0.8718)">35</div><div class="hdd" style="left:28px;top:217px;width:9px;height:1px"></div><div class="t" style="left:39px;top:226px;color:#8e1e8e">Use Template Actors (sor...</div><div class="t" style="left:159px;top:226px;color:#8e1e8e;font-size:9.75px;transform:scaleX(0.8718)">Stats</div><div class="t" style="left:309px;top:226px;color:#8a8a8a;font-size:9.75px;transform:scaleX(0.8718)">Stats</div><div class="hdd" style="left:28px;top:232px;width:9px;height:1px"></div><svg style="position:absolute;left:24px;top:228.5px" width="7" height="7"><defs><linearGradient id="eb" x1="0" y1="0" x2="0" y2="1"><stop offset="0" stop-color="#ffffff"/><stop offset="1" stop-color="#dcdcdc"/></linearGradient></defs><rect x="0.5" y="0.5" width="6" height="6" rx="1.2" fill="url(#eb)" stroke="#9a9a9a"/><rect x="1.5" y="3" width="4" height="1" fill="#4a6ac0"/></svg><div class="t" style="left:54px;top:241px;color:#8e1e8e">Stats</div><div class="t" style="left:159px;top:241px;color:#8e1e8e;font-size:9.75px;transform:scaleX(0.8718)">Stats</div><div class="t" style="left:309px;top:241px;color:#8a8a8a;font-size:9.75px;transform:scaleX(0.8718)">Stats</div><div class="hdd" style="left:43px;top:247px;width:9px;height:1px"></div><div class="t" style="left:39px;top:256px;color:#8e1e8e">Bleedout Override</div><div class="t" style="left:159px;top:256px;color:#8e1e8e;font-size:9.75px;transform:scaleX(0.8718)">0</div><div class="t" style="left:309px;top:256px;color:#8a8a8a;font-size:9.75px;transform:scaleX(0.8718)">0</div><div class="hdd" style="left:28px;top:262px;width:9px;height:1px"></div><div class="t" style="left:39px;top:271px;color:#8e1e8e">Unknown</div><div class="t" style="left:159px;top:271px;color:#8e1e8e;font-size:9.75px;transform:scaleX(0.8718)">74 C1</div><div class="t" style="left:309px;top:271px;color:#8a8a8a;font-size:9.75px;transform:scaleX(0.8718)">74 C1</div><div class="hdd" style="left:28px;top:277px;width:9px;height:1px"></div><div class="t" style="left:24px;top:286px;color:#8e1e8e">Factions (sorted)</div><div class="hdd" style="left:13px;top:292px;width:9px;height:1px"></div><svg style="position:absolute;left:9px;top:288.5px" width="7" height="7"><defs><linearGradient id="eb" x1="0" y1="0" x2="0" y2="1"><stop offset="0" stop-color="#ffffff"/><stop offset="1" stop-color="#dcdcdc"/></linearGradient></defs><rect x="0.5" y="0.5" width="6" height="6" rx="1.2" fill="url(#eb)" stroke="#9a9a9a"/><rect x="1.5" y="3" width="4" height="1" fill="#4a6ac0"/></svg><div class="t" style="left:39px;top:301px;color:#8e1e8e">SNAM - Faction</div><div class="t" style="left:159px;top:301px;color:#8e1e8e;font-size:9.75px;transform:scaleX(0.8718)">DN053_VirgilFaction [FACT:000A...</div><div class="t" style="left:309px;top:301px;color:#8a8a8a;font-size:9.75px;transform:scaleX(0.8718)">DN053_VirgilFaction [FACT:000ADDF7] (Rank: 0)</div><div class="hdd" style="left:28px;top:307px;width:9px;height:1px"></div><svg style="position:absolute;left:24px;top:303.5px" width="7" height="7"><defs><linearGradient id="eb" x1="0" y1="0" x2="0" y2="1"><stop offset="0" stop-color="#ffffff"/><stop offset="1" stop-color="#dcdcdc"/></linearGradient></defs><rect x="0.5" y="0.5" width="6" height="6" rx="1.2" fill="url(#eb)" stroke="#9a9a9a"/><rect x="1.5" y="3" width="4" height="1" fill="#4a6ac0"/><rect x="3" y="1.5" width="1" height="4" fill="#4a6ac0"/></svg><div class="t" style="left:24px;top:316px;color:#a0a0a0">INAM - Death item</div><div class="hdd" style="left:13px;top:322px;width:9px;height:1px"></div><div class="t" style="left:24px;top:331px;color:#8e1e8e">VTCK - Voice</div><div class="t" style="left:159px;top:331px;color:#8e1e8e;font-size:9.75px;transform:scaleX(0.8718)">NPCMVirgil [VTYP:0006B504]</div><div class="t" style="left:309px;top:331px;color:#8a8a8a;font-size:9.75px;transform:scaleX(0.8718)">NPCMVirgil [VTYP:0006B504]</div><div class="hdd" style="left:13px;top:337px;width:9px;height:1px"></div><div class="t" style="left:24px;top:346px;color:#8e1e8e">TPLT - Default Template</div><div class="t" style="left:159px;top:346px;color:#8e1e8e;font-size:9.75px;transform:scaleX(0.8718)">LCharSuperMutantMelee [LVLN:...</div><div class="t" style="left:309px;top:346px;color:#8a8a8a;font-size:9.75px;transform:scaleX(0.8718)">LCharSuperMutantMelee [LVLN:000EDCDE]</div><div class="hdd" style="left:13px;top:352px;width:9px;height:1px"></div><div class="t" style="left:24px;top:361px;color:#a0a0a0">LTPT - Legendary Template</div><div class="hdd" style="left:13px;top:367px;width:9px;height:1px"></div><div class="t" style="left:24px;top:376px;color:#a0a0a0">LTPC - Legendary Chance</div><div class="hdd" style="left:13px;top:382px;width:9px;height:1px"></div><div class="t" style="left:24px;top:391px;color:#8e1e8e">TPTA - Template Actors</div><div class="hdd" style="left:13px;top:397px;width:9px;height:1px"></div><svg style="position:absolute;left:9px;top:393.5px" width="7" height="7"><defs><linearGradient id="eb" x1="0" y1="0" x2="0" y2="1"><stop offset="0" stop-color="#ffffff"/><stop offset="1" stop-color="#dcdcdc"/></linearGradient></defs><rect x="0.5" y="0.5" width="6" height="6" rx="1.2" fill="url(#eb)" stroke="#9a9a9a"/><rect x="1.5" y="3" width="4" height="1" fill="#4a6ac0"/></svg><div class="t" style="left:39px;top:406px;color:#8e1e8e">Stats</div><div class="t" style="left:159px;top:406px;color:#8e1e8e;font-size:9.75px;transform:scaleX(0.8718)">LCharSuperMutantRifleBoss [LVL...</div><div class="t" style="left:309px;top:406px;color:#8a8a8a;font-size:9.75px;transform:scaleX(0.8718)">LCharSuperMutantRifleBoss [LVLN:001FDE6B]</div><div class="hdd" style="left:28px;top:412px;width:9px;height:1px"></div><div class="t" style="left:24px;top:421px;color:#8e1e8e">RNAM - Race</div><div class="t" style="left:159px;top:421px;color:#8e1e8e;font-size:9.75px;transform:scaleX(0.8718)">SuperMutantRace [RACE:0001A0...</div><div class="t" style="left:309px;top:421px;color:#8a8a8a;font-size:9.75px;transform:scaleX(0.8718)">SuperMutantRace [RACE:0001A009]</div><div class="hdd" style="left:13px;top:427px;width:9px;height:1px"></div><div class="t" style="left:24px;top:436px;color:#a0a0a0">SPCT - Count</div><div class="hdd" style="left:13px;top:442px;width:9px;height:1px"></div><div class="t" style="left:24px;top:451px;color:#a0a0a0">Actor Effects</div><div class="hdd" style="left:13px;top:457px;width:9px;height:1px"></div><div class="t" style="left:24px;top:466px;color:#a0a0a0">Destructible</div><div class="hdd" style="left:13px;top:472px;width:9px;height:1px"></div><div class="t" style="left:24px;top:481px;color:#8e1e8e">WNAM - Skin</div><div class="t" style="left:159px;top:481px;color:#8e1e8e;font-size:9.75px;transform:scaleX(0.8718)">SkinVirgil [ARMO:0013B3E5]</div><div class="t" style="left:309px;top:481px;color:#8a8a8a;font-size:9.75px;transform:scaleX(0.8718)">SkinVirgil [ARMO:0013B3E5]</div><div class="hdd" style="left:13px;top:487px;width:9px;height:1px"></div><div class="t" style="left:24px;top:496px;color:#a0a0a0">ANAM - Far away model</div><div class="hdd" style="left:13px;top:502px;width:9px;height:1px"></div><div class="t" style="left:24px;top:511px;color:#8e1e8e">ATKR - Attack Race</div><div class="t" style="left:159px;top:511px;color:#8e1e8e;font-size:9.75px;transform:scaleX(0.8718)">SuperMutantRace [RACE:0001A0...</div><div class="t" style="left:309px;top:511px;color:#8a8a8a;font-size:9.75px;transform:scaleX(0.8718)">SuperMutantRace [RACE:0001A009]</div><div class="hdd" style="left:13px;top:517px;width:9px;height:1px"></div><div class="t" style="left:24px;top:526px;color:#a0a0a0">Attacks</div><div class="hdd" style="left:13px;top:532px;width:9px;height:1px"></div><div class="t" style="left:24px;top:541px;color:#a0a0a0">SPOR - Spectator Override P...</div><div class="hdd" style="left:13px;top:547px;width:9px;height:1px"></div><div class="t" style="left:24px;top:556px;color:#a0a0a0">OCOR - Observe Dead Body ...</div><div class="hdd" style="left:13px;top:562px;width:9px;height:1px"></div><div class="t" style="left:24px;top:571px;color:#a0a0a0">GWOR - Guard Warn Overrid...</div><div class="hdd" style="left:13px;top:577px;width:9px;height:1px"></div><div class="t" style="left:24px;top:586px;color:#a0a0a0">ECOR - Combat Override Pa...</div><div class="hdd" style="left:13px;top:592px;width:9px;height:1px"></div><div class="t" style="left:24px;top:601px;color:#a0a0a0">FCPL - Follower Command P...</div><div class="hdd" style="left:13px;top:607px;width:9px;height:1px"></div><div class="t" style="left:24px;top:616px;color:#a0a0a0">RCLR - Follower Elevator Pac...</div><div class="hdd" style="left:13px;top:622px;width:9px;height:1px"></div><div class="t" style="left:24px;top:631px;color:#8e1e8e">PRKZ - Perk Count</div><div class="t" style="left:159px;top:631px;color:#8e1e8e;font-size:9.75px;transform:scaleX(0.8718)">2</div><div class="t" style="left:309px;top:631px;color:#8a8a8a;font-size:9.75px;transform:scaleX(0.8718)">2</div><div class="hdd" style="left:13px;top:637px;width:9px;height:1px"></div><div class="t" style="left:24px;top:646px;color:#8e1e8e">Perks (sorted)</div><div class="hdd" style="left:13px;top:652px;width:9px;height:1px"></div><svg style="position:absolute;left:9px;top:648.5px" width="7" height="7"><defs><linearGradient id="eb" x1="0" y1="0" x2="0" y2="1"><stop offset="0" stop-color="#ffffff"/><stop offset="1" stop-color="#dcdcdc"/></linearGradient></defs><rect x="0.5" y="0.5" width="6" height="6" rx="1.2" fill="url(#eb)" stroke="#9a9a9a"/><rect x="1.5" y="3" width="4" height="1" fill="#4a6ac0"/></svg><div class="t" style="left:39px;top:661px;color:#8e1e8e">PRKR - Perk</div><div class="hdd" style="left:28px;top:667px;width:9px;height:1px"></div><svg style="position:absolute;left:24px;top:663.5px" width="7" height="7"><defs><linearGradient id="eb" x1="0" y1="0" x2="0" y2="1"><stop offset="0" stop-color="#ffffff"/><stop offset="1" stop-color="#dcdcdc"/></linearGradient></defs><rect x="0.5" y="0.5" width="6" height="6" rx="1.2" fill="url(#eb)" stroke="#9a9a9a"/><rect x="1.5" y="3" width="4" height="1" fill="#4a6ac0"/></svg><div class="t" style="left:54px;top:676px;color:#8e1e8e">Perk</div><div class="t" style="left:159px;top:676px;color:#8e1e8e;font-size:9.75px;transform:scaleX(0.8718)">ImmuneToRadiation [PERK:000A...</div><div class="t" style="left:309px;top:676px;color:#8a8a8a;font-size:9.75px;transform:scaleX(0.8718)">ImmuneToRadiation [PERK:000A2775]</div><div class="hdd" style="left:43px;top:682px;width:9px;height:1px"></div><div class="t" style="left:54px;top:691px;color:#8e1e8e">Rank</div><div class="t" style="left:159px;top:691px;color:#8e1e8e;font-size:9.75px;transform:scaleX(0.8718)">1</div><div class="t" style="left:309px;top:691px;color:#8a8a8a;font-size:9.75px;transform:scaleX(0.8718)">1</div><div class="hdd" style="left:43px;top:697px;width:9px;height:1px"></div><div class="t" style="left:39px;top:706px;color:#8e1e8e">PRKR - Perk</div><div class="hdd" style="left:28px;top:712px;width:9px;height:1px"></div><svg style="position:absolute;left:24px;top:708.5px" width="7" height="7"><defs><linearGradient id="eb" x1="0" y1="0" x2="0" y2="1"><stop offset="0" stop-color="#ffffff"/><stop offset="1" stop-color="#dcdcdc"/></linearGradient></defs><rect x="0.5" y="0.5" width="6" height="6" rx="1.2" fill="url(#eb)" stroke="#9a9a9a"/><rect x="1.5" y="3" width="4" height="1" fill="#4a6ac0"/></svg><div class="t" style="left:54px;top:721px;color:#8e1e8e">Perk</div><div class="t" style="left:159px;top:721px;color:#8e1e8e;font-size:9.75px;transform:scaleX(0.8718)">VirgilDefense [PERK:0022F0FA]</div><div class="t" style="left:309px;top:721px;color:#8a8a8a;font-size:9.75px;transform:scaleX(0.8718)">VirgilDefense [PERK:0022F0FA]</div><div class="hdd" style="left:43px;top:727px;width:9px;height:1px"></div><div class="t" style="left:54px;top:736px;color:#8e1e8e">Rank</div><div class="t" style="left:159px;top:736px;color:#8e1e8e;font-size:9.75px;transform:scaleX(0.8718)">1</div><div class="t" style="left:309px;top:736px;color:#8a8a8a;font-size:9.75px;transform:scaleX(0.8718)">1</div><div class="hdd" style="left:43px;top:742px;width:9px;height:1px"></div><div class="t" style="left:24px;top:751px;color:#8e1e8e">PRPS - Properties (sorted)</div><div class="hdd" style="left:13px;top:757px;width:9px;height:1px"></div><svg style="position:absolute;left:9px;top:753.5px" width="7" height="7"><defs><linearGradient id="eb" x1="0" y1="0" x2="0" y2="1"><stop offset="0" stop-color="#ffffff"/><stop offset="1" stop-color="#dcdcdc"/></linearGradient></defs><rect x="0.5" y="0.5" width="6" height="6" rx="1.2" fill="url(#eb)" stroke="#9a9a9a"/><rect x="1.5" y="3" width="4" height="1" fill="#4a6ac0"/></svg><div class="t" style="left:39px;top:766px;color:#8e1e8e">Property</div><div class="t" style="left:159px;top:766px;color:#8e1e8e;font-size:9.75px;transform:scaleX(0.8718)">Strength = 0</div><div class="t" style="left:309px;top:766px;color:#8a8a8a;font-size:9.75px;transform:scaleX(0.8718)">Strength = 0</div><div class="hdd" style="left:28px;top:772px;width:9px;height:1px"></div><svg style="position:absolute;left:24px;top:768.5px" width="7" height="7"><defs><linearGradient id="eb" x1="0" y1="0" x2="0" y2="1"><stop offset="0" stop-color="#ffffff"/><stop offset="1" stop-color="#dcdcdc"/></linearGradient></defs><rect x="0.5" y="0.5" width="6" height="6" rx="1.2" fill="url(#eb)" stroke="#9a9a9a"/><rect x="1.5" y="3" width="4" height="1" fill="#4a6ac0"/><rect x="3" y="1.5" width="1" height="4" fill="#4a6ac0"/></svg><div class="t" style="left:39px;top:781px;color:#8e1e8e">Property</div><div class="t" style="left:159px;top:781px;color:#8e1e8e;font-size:9.75px;transform:scaleX(0.8718)">Perception = 0</div><div class="t" style="left:309px;top:781px;color:#8a8a8a;font-size:9.75px;transform:scaleX(0.8718)">Perception = 0</div><div class="hdd" style="left:28px;top:787px;width:9px;height:1px"></div><svg style="position:absolute;left:24px;top:783.5px" width="7" height="7"><defs><linearGradient id="eb" x1="0" y1="0" x2="0" y2="1"><stop offset="0" stop-color="#ffffff"/><stop offset="1" stop-color="#dcdcdc"/></linearGradient></defs><rect x="0.5" y="0.5" width="6" height="6" rx="1.2" fill="url(#eb)" stroke="#9a9a9a"/><rect x="1.5" y="3" width="4" height="1" fill="#4a6ac0"/><rect x="3" y="1.5" width="1" height="4" fill="#4a6ac0"/></svg><div class="t" style="left:39px;top:796px;color:#8e1e8e">Property</div><div class="t" style="left:159px;top:796px;color:#8e1e8e;font-size:9.75px;transform:scaleX(0.8718)">Endurance = 0</div><div class="t" style="left:309px;top:796px;color:#8a8a8a;font-size:9.75px;transform:scaleX(0.8718)">Endurance = 0</div><div class="hdd" style="left:28px;top:802px;width:9px;height:1px"></div><svg style="position:absolute;left:24px;top:798.5px" width="7" height="7"><defs><linearGradient id="eb" x1="0" y1="0" x2="0" y2="1"><stop offset="0" stop-color="#ffffff"/><stop offset="1" stop-color="#dcdcdc"/></linearGradient></defs><rect x="0.5" y="0.5" width="6" height="6" rx="1.2" fill="url(#eb)" stroke="#9a9a9a"/><rect x="1.5" y="3" width="4" height="1" fill="#4a6ac0"/><rect x="3" y="1.5" width="1" height="4" fill="#4a6ac0"/></svg><div class="t" style="left:39px;top:811px;color:#8e1e8e">Property</div><div class="t" style="left:159px;top:811px;color:#8e1e8e;font-size:9.75px;transform:scaleX(0.8718)">Charisma = 0</div><div class="t" style="left:309px;top:811px;color:#8a8a8a;font-size:9.75px;transform:scaleX(0.8718)">Charisma = 0</div><div class="hdd" style="left:28px;top:817px;width:9px;height:1px"></div><svg style="position:absolute;left:24px;top:813.5px" width="7" height="7"><defs><linearGradient id="eb" x1="0" y1="0" x2="0" y2="1"><stop offset="0" stop-color="#ffffff"/><stop offset="1" stop-color="#dcdcdc"/></linearGradient></defs><rect x="0.5" y="0.5" width="6" height="6" rx="1.2" fill="url(#eb)" stroke="#9a9a9a"/><rect x="1.5" y="3" width="4" height="1" fill="#4a6ac0"/><rect x="3" y="1.5" width="1" height="4" fill="#4a6ac0"/></svg><div class="t" style="left:39px;top:826px;color:#8e1e8e">Property</div><div class="t" style="left:159px;top:826px;color:#8e1e8e;font-size:9.75px;transform:scaleX(0.8718)">Intelligence = 0</div><div class="t" style="left:309px;top:826px;color:#8a8a8a;font-size:9.75px;transform:scaleX(0.8718)">Intelligence = 0</div><div class="hdd" style="left:28px;top:832px;width:9px;height:1px"></div><svg style="position:absolute;left:24px;top:828.5px" width="7" height="7"><defs><linearGradient id="eb" x1="0" y1="0" x2="0" y2="1"><stop offset="0" stop-color="#ffffff"/><stop offset="1" stop-color="#dcdcdc"/></linearGradient></defs><rect x="0.5" y="0.5" width="6" height="6" rx="1.2" fill="url(#eb)" stroke="#9a9a9a"/><rect x="1.5" y="3" width="4" height="1" fill="#4a6ac0"/><rect x="3" y="1.5" width="1" height="4" fill="#4a6ac0"/></svg><div class="t" style="left:39px;top:841px;color:#8e1e8e">Property</div><div class="t" style="left:159px;top:841px;color:#8e1e8e;font-size:9.75px;transform:scaleX(0.8718)">Agility = 0</div><div class="t" style="left:309px;top:841px;color:#8a8a8a;font-size:9.75px;transform:scaleX(0.8718)">Agility = 0</div><div class="hdd" style="left:28px;top:847px;width:9px;height:1px"></div><svg style="position:absolute;left:24px;top:843.5px" width="7" height="7"><defs><linearGradient id="eb" x1="0" y1="0" x2="0" y2="1"><stop offset="0" stop-color="#ffffff"/><stop offset="1" stop-color="#dcdcdc"/></linearGradient></defs><rect x="0.5" y="0.5" width="6" height="6" rx="1.2" fill="url(#eb)" stroke="#9a9a9a"/><rect x="1.5" y="3" width="4" height="1" fill="#4a6ac0"/><rect x="3" y="1.5" width="1" height="4" fill="#4a6ac0"/></svg><div class="t" style="left:39px;top:856px;color:#8e1e8e">Property</div><div class="t" style="left:159px;top:856px;color:#8e1e8e;font-size:9.75px;transform:scaleX(0.8718)">Luck = 0</div><div class="t" style="left:309px;top:856px;color:#8a8a8a;font-size:9.75px;transform:scaleX(0.8718)">Luck = 0</div><div class="hdd" style="left:28px;top:862px;width:9px;height:1px"></div><svg style="position:absolute;left:24px;top:858.5px" width="7" height="7"><defs><linearGradient id="eb" x1="0" y1="0" x2="0" y2="1"><stop offset="0" stop-color="#ffffff"/><stop offset="1" stop-color="#dcdcdc"/></linearGradient></defs><rect x="0.5" y="0.5" width="6" height="6" rx="1.2" fill="url(#eb)" stroke="#9a9a9a"/><rect x="1.5" y="3" width="4" height="1" fill="#4a6ac0"/><rect x="3" y="1.5" width="1" height="4" fill="#4a6ac0"/></svg><div class="t" style="left:39px;top:871px;color:#8e1e8e">Property</div><div class="t" style="left:159px;top:871px;color:#8e1e8e;font-size:9.75px;transform:scaleX(0.8718)">Health = 0</div><div class="t" style="left:309px;top:871px;color:#8a8a8a;font-size:9.75px;transform:scaleX(0.8718)">Health = 0</div><div class="hdd" style="left:28px;top:877px;width:9px;height:1px"></div><svg style="position:absolute;left:24px;top:873.5px" width="7" height="7"><defs><linearGradient id="eb" x1="0" y1="0" x2="0" y2="1"><stop offset="0" stop-color="#ffffff"/><stop offset="1" stop-color="#dcdcdc"/></linearGradient></defs><rect x="0.5" y="0.5" width="6" height="6" rx="1.2" fill="url(#eb)" stroke="#9a9a9a"/><rect x="1.5" y="3" width="4" height="1" fill="#4a6ac0"/><rect x="3" y="1.5" width="1" height="4" fill="#4a6ac0"/></svg><div class="t" style="left:39px;top:886px;color:#8e1e8e">Property</div><div class="t" style="left:159px;top:886px;color:#8e1e8e;font-size:9.75px;transform:scaleX(0.8718)">ActionPoints = 0</div><div class="t" style="left:309px;top:886px;color:#8a8a8a;font-size:9.75px;transform:scaleX(0.8718)">ActionPoints = 0</div><div class="hdd" style="left:28px;top:892px;width:9px;height:1px"></div><svg style="position:absolute;left:24px;top:888.5px" width="7" height="7"><defs><linearGradient id="eb" x1="0" y1="0" x2="0" y2="1"><stop offset="0" stop-color="#ffffff"/><stop offset="1" stop-color="#dcdcdc"/></linearGradient></defs><rect x="0.5" y="0.5" width="6" height="6" rx="1.2" fill="url(#eb)" stroke="#9a9a9a"/><rect x="1.5" y="3" width="4" height="1" fill="#4a6ac0"/><rect x="3" y="1.5" width="1" height="4" fill="#4a6ac0"/></svg><div class="t" style="left:39px;top:901px;color:#8e1e8e">Property</div><div class="t" style="left:159px;top:901px;color:#8e1e8e;font-size:9.75px;transform:scaleX(0.8718)">SpeedMult = 100</div><div class="t" style="left:309px;top:901px;color:#8a8a8a;font-size:9.75px;transform:scaleX(0.8718)">SpeedMult = 100</div><div class="hdd" style="left:28px;top:907px;width:9px;height:1px"></div><svg style="position:absolute;left:24px;top:903.5px" width="7" height="7"><defs><linearGradient id="eb" x1="0" y1="0" x2="0" y2="1"><stop offset="0" stop-color="#ffffff"/><stop offset="1" stop-color="#dcdcdc"/></linearGradient></defs><rect x="0.5" y="0.5" width="6" height="6" rx="1.2" fill="url(#eb)" stroke="#9a9a9a"/><rect x="1.5" y="3" width="4" height="1" fill="#4a6ac0"/><rect x="3" y="1.5" width="1" height="4" fill="#4a6ac0"/></svg><div style="left:11px;top:7px;width:1px;height:15px" class="vd"></div><div style="left:11px;top:22px;width:1px;height:15px" class="vd"></div><div style="left:11px;top:37px;width:1px;height:15px" class="vd"></div><div style="left:11px;top:52px;width:1px;height:15px" class="vd"></div><div style="left:11px;top:67px;width:1px;height:15px" class="vd"></div><div style="left:11px;top:82px;width:1px;height:15px" class="vd"></div><div style="left:11px;top:97px;width:1px;height:195px" class="vd"></div><div style="left:26px;top:112px;width:1px;height:45px" class="vd"></div><div style="left:26px;top:101px;width:1px;height:11px" class="vd"></div><div style="left:41px;top:127px;width:1px;height:15px" class="vd"></div><div style="left:41px;top:116px;width:1px;height:11px" class="vd"></div><div style="left:26px;top:157px;width:1px;height:15px" class="vd"></div><div style="left:26px;top:172px;width:1px;height:15px" class="vd"></div><div style="left:26px;top:187px;width:1px;height:15px" class="vd"></div><div style="left:26px;top:202px;width:1px;height:15px" class="vd"></div><div style="left:26px;top:217px;width:1px;height:15px" class="vd"></div><div style="left:26px;top:232px;width:1px;height:30px" class="vd"></div><div style="left:41px;top:236px;width:1px;height:11px" class="vd"></div><div style="left:26px;top:262px;width:1px;height:15px" class="vd"></div><div style="left:11px;top:292px;width:1px;height:30px" class="vd"></div><div style="left:26px;top:296px;width:1px;height:11px" class="vd"></div><div style="left:11px;top:322px;width:1px;height:15px" class="vd"></div><div style="left:11px;top:337px;width:1px;height:15px" class="vd"></div><div style="left:11px;top:352px;width:1px;height:15px" class="vd"></div><div style="left:11px;top:367px;width:1px;height:15px" class="vd"></div><div style="left:11px;top:382px;width:1px;height:15px" class="vd"></div><div style="left:11px;top:397px;width:1px;height:30px" class="vd"></div><div style="left:26px;top:401px;width:1px;height:11px" class="vd"></div><div style="left:11px;top:427px;width:1px;height:15px" class="vd"></div><div style="left:11px;top:442px;width:1px;height:15px" class="vd"></div><div style="left:11px;top:457px;width:1px;height:15px" class="vd"></div><div style="left:11px;top:472px;width:1px;height:15px" class="vd"></div><div style="left:11px;top:487px;width:1px;height:15px" class="vd"></div><div style="left:11px;top:502px;width:1px;height:15px" class="vd"></div><div style="left:11px;top:517px;width:1px;height:15px" class="vd"></div><div style="left:11px;top:532px;width:1px;height:15px" class="vd"></div><div style="left:11px;top:547px;width:1px;height:15px" class="vd"></div><div style="left:11px;top:562px;width:1px;height:15px" class="vd"></div><div style="left:11px;top:577px;width:1px;height:15px" class="vd"></div><div style="left:11px;top:592px;width:1px;height:15px" class="vd"></div><div style="left:11px;top:607px;width:1px;height:15px" class="vd"></div><div style="left:11px;top:622px;width:1px;height:15px" class="vd"></div><div style="left:11px;top:637px;width:1px;height:15px" class="vd"></div><div style="left:11px;top:652px;width:1px;height:105px" class="vd"></div><div style="left:26px;top:667px;width:1px;height:45px" class="vd"></div><div style="left:26px;top:656px;width:1px;height:11px" class="vd"></div><div style="left:41px;top:682px;width:1px;height:15px" class="vd"></div><div style="left:41px;top:671px;width:1px;height:11px" class="vd"></div><div style="left:41px;top:727px;width:1px;height:15px" class="vd"></div><div style="left:41px;top:716px;width:1px;height:11px" class="vd"></div><div style="left:26px;top:772px;width:1px;height:15px" class="vd"></div><div style="left:26px;top:761px;width:1px;height:11px" class="vd"></div><div style="left:26px;top:787px;width:1px;height:15px" class="vd"></div><div style="left:26px;top:802px;width:1px;height:15px" class="vd"></div><div style="left:26px;top:817px;width:1px;height:15px" class="vd"></div><div style="left:26px;top:832px;width:1px;height:15px" class="vd"></div><div style="left:26px;top:847px;width:1px;height:15px" class="vd"></div><div style="left:26px;top:862px;width:1px;height:15px" class="vd"></div><div style="left:26px;top:877px;width:1px;height:15px" class="vd"></div><div style="left:26px;top:892px;width:1px;height:15px" class="vd"></div><div style="left:300px;top:480px;width:339px;height:1px;background:repeating-linear-gradient(90deg,#606060 0 2px,transparent 2px 3px)"></div><div style="left:300px;top:494px;width:339px;height:1px;background:repeating-linear-gradient(90deg,#606060 0 2px,transparent 2px 3px)"></div><div style="left:300px;top:480px;width:1px;height:15px;background:repeating-linear-gradient(180deg,#606060 0 2px,transparent 2px 3px)"></div><div style="left:638px;top:480px;width:1px;height:15px;background:repeating-linear-gradient(180deg,#606060 0 2px,transparent 2px 3px)"></div></div><div style="left:1339px;top:570px;width:258px;height:28px;border:4px solid #e4161e"></div><div style="left:1900px;top:96px;width:12px;height:909px;background:#f0f0f0"></div><svg style="position:absolute;left:1900px;top:98px" width="12" height="8"><path d="M2.5 6L6 2.5L9.5 6" stroke="#606060" stroke-width="1.4" fill="none"/></svg><svg style="position:absolute;left:1900px;top:995px" width="12" height="8"><path d="M2.5 2L6 5.5L9.5 2" stroke="#606060" stroke-width="1.4" fill="none"/></svg><div style="left:1901px;top:109px;width:10px;height:422px;background:#cdcdcd"></div><div style="left:1038px;top:1009px;width:877px;height:19px;background:#f0f0f0"></div><div style="left:1038px;top:1009px;width:38px;height:17px;background:#fff"></div><div style="left:1157px;top:1010px;width:1px;height:16px;background:#e0e0e0"></div><div style="left:1204px;top:1010px;width:1px;height:16px;background:#e0e0e0"></div><div style="left:1261px;top:1010px;width:1px;height:16px;background:#e0e0e0"></div><div style="left:1315px;top:1010px;width:1px;height:16px;background:#e0e0e0"></div><div class="t" style="left:1044px;top:1013px;">View</div><div class="t" style="left:1080px;top:1012px;">Referenced By (28)</div><div class="t" style="left:1162px;top:1012px;">Messages</div><div class="t" style="left:1209px;top:1012px;">Information</div><div class="t" style="left:1266px;top:1012px;">What's New</div><div style="left:0px;top:1050px;width:1920px;height:30px;background:#0c1d2b"></div><div style="left:185px;top:1050px;width:36px;height:30px;background:#0e4a80"></div><div style="left:41px;top:1078px;width:30px;height:2px;background:#99c9ee"></div><div style="left:78px;top:1078px;width:30px;height:2px;background:#99c9ee"></div><div style="left:115px;top:1078px;width:30px;height:2px;background:#99c9ee"></div><div style="left:151px;top:1078px;width:30px;height:2px;background:#99c9ee"></div><div style="left:185px;top:1078px;width:36px;height:2px;background:#99c9ee"></div><svg style="position:absolute;left:12px;top:1059px" width="13" height="13"><path d="M0 1.8L5.3 1V6H0Z M6.2 0.9L13 0V6H6.2Z M0 7H5.3V12L0 11.2Z M6.2 7H13V13L6.2 12.1Z" fill="#fff"/></svg><svg style="position:absolute;left:46px;top:1055px" width="20" height="20"><defs><radialGradient id="ff" cx="0.45" cy="0.6" r="0.6"><stop offset="0" stop-color="#ffb02a"/><stop offset="0.6" stop-color="#ff5a2a"/><stop offset="1" stop-color="#e2245a"/></radialGradient></defs><circle cx="10" cy="11" r="8.5" fill="url(#ff)"/><path d="M11 1.5Q17 4 18.5 10Q17 5 13 4Z" fill="#ffd23a"/><path d="M3 5Q4 3 6 3Q5 5 6 6Z" fill="#ff8a2a"/><circle cx="10.5" cy="11" r="4.2" fill="#7a3ac8"/><path d="M5 8Q9 5 13 8Q10 7.5 8 9Z" fill="#ff7a2a"/></svg><svg style="position:absolute;left:84px;top:1056px" width="18" height="18"><circle cx="9" cy="9" r="9" fill="#5865f2"/><path d="M5 5.5Q7 4.8 8 5.3H10Q11 4.8 13 5.5Q14.5 8 14.5 11Q13 12.5 11.5 12.5L11 11.5Q9 12 7 11.5L6.5 12.5Q5 12.5 3.5 11Q3.5 8 5 5.5Z" fill="#fff"/><ellipse cx="7" cy="9" rx="1" ry="1.2" fill="#5865f2"/><ellipse cx="11" cy="9" rx="1" ry="1.2" fill="#5865f2"/></svg><svg style="position:absolute;left:121px;top:1057px" width="18" height="16"><path d="M1 2Q1 1 2 1H7L8.5 2.5H16Q17 2.5 17 3.5V14H1Z" fill="#e8b83a"/><path d="M1 4.5H17V14H1Z" fill="#fcd35a"/><path d="M4.5 10H13.5V14H11V12H7V14H4.5Z" fill="#2a8ae0"/></svg><div style="left:157px;top:1056px;width:19px;height:18px;border-radius:50%;background:#f59c0c"></div><div class="t" style="left:160.5px;top:1058px;font-size:15px;font-weight:bold;color:#111;line-height:14px;-webkit-text-stroke-width:0">A</div><svg style="position:absolute;left:194px;top:1056px" width="18" height="18"><circle cx="9" cy="9" r="8.5" fill="#b8bcc8" stroke="#707888" stroke-width="0.8"/><path d="M8 3Q10 2 10.5 4L10 8L11 15H7.5L8 8Z" fill="#e8d070"/><circle cx="9" cy="4" r="2" fill="#f0d888"/><path d="M3 6L6 5L6.5 9L4 10Z M12 5L15 6L14 10L11.5 9Z M4 11L6.5 11L6 14L4 13Z M11.5 11L14 11L13.5 14L11.5 14Z" fill="#d02828"/><path d="M2 9H5M13 9H16" stroke="#3a5ab0" stroke-width="1.2"/></svg><svg style="position:absolute;left:1754px;top:1059px" width="12" height="8"><path d="M1.5 6.5L6 2L10.5 6.5" stroke="#fff" stroke-width="1" fill="none"/></svg><svg style="position:absolute;left:1771px;top:1058px" width="14" height="13"><rect x="3.5" y="1.5" width="9" height="7" fill="none" stroke="#fff"/><path d="M1 1.5H3M1 3H3M1 4.5H3M8 9V11M5 11.5H11M1 6V11" stroke="#fff" stroke-width="1"/></svg><svg style="position:absolute;left:1789px;top:1058px" width="14" height="13"><path d="M1 4.5H3.5L7 1.5V11.5L3.5 8.5H1Z" fill="none" stroke="#fff"/><path d="M9 4Q10.5 6.5 9 9M11 2.5Q13 6.5 11 10.5" stroke="#fff" fill="none" stroke-width="0.9"/></svg><div class="t" style="left:1809px;top:1058.5px;color:#fff;font-size:9.75px;transform:scaleX(0.8718)">ENG</div><div class="t" style="left:1840px;top:1052px;color:#fff;font-size:9.75px;transform:scaleX(0.8718)">9:37 PM</div><div class="t" style="left:1837px;top:1065.5px;color:#fff;font-size:9.75px;transform:scaleX(0.8718)">9/24/2024</div><svg style="position:absolute;left:1888px;top:1058px" width="14" height="14"><path d="M1.5 1.5H12.5V10H8L6 12.5L5 10H1.5Z" fill="none" stroke="#fff"/></svg><div style="left:1916px;top:1050px;width:1px;height:30px;background:#4a5a68"></div></body></html>
